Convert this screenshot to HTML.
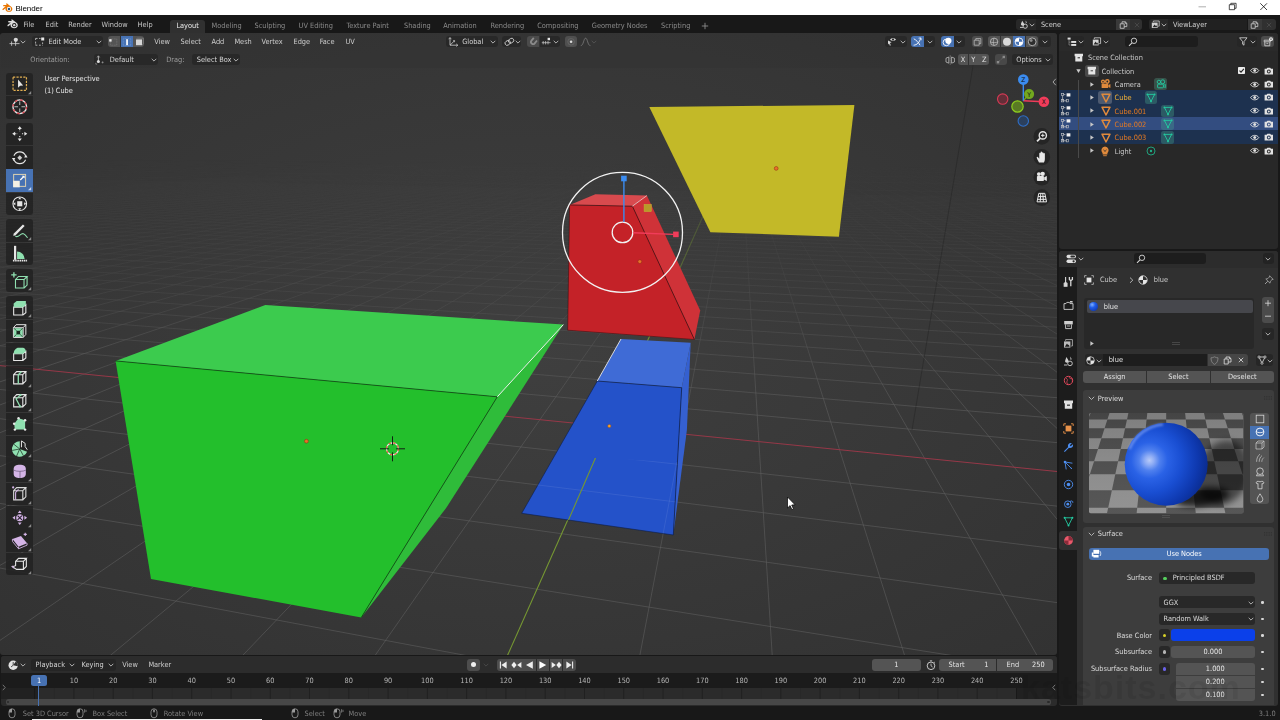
<!DOCTYPE html>
<html><head><meta charset="utf-8"><title>Blender</title>
<style>
html,body{margin:0;padding:0;background:#181818;}
body{width:1280px;height:720px;overflow:hidden;position:relative;font-family:"DejaVu Sans Condensed","DejaVu Sans","Liberation Sans",sans-serif;font-size:7.33px;color:#d4d4d4;-webkit-font-smoothing:antialiased;}
div{box-sizing:border-box;}
svg{overflow:visible;}
</style></head><body>
<svg style="position:absolute;left:0px;top:33px;" width="1057" height="622" viewBox="0 0 1057 622"><defs>
<radialGradient id="vbg" cx="50%" cy="50%" r="70.7%"><stop offset="0" stop-color="#3f3f3f"/><stop offset="1" stop-color="#323232"/></radialGradient>
<linearGradient id="gfade" x1="0" y1="0" x2="0" y2="1"><stop offset="0.20" stop-color="#000"/><stop offset="0.38" stop-color="#4a4a4a"/><stop offset="0.60" stop-color="#fff"/></linearGradient>
<mask id="gmask" maskUnits="userSpaceOnUse" x="0" y="0" width="1057" height="622"><rect width="1057" height="622" fill="url(#gfade)"/></mask>
<linearGradient id="afade" x1="0" y1="0" x2="0" y2="1"><stop offset="0.20" stop-color="#000"/><stop offset="0.36" stop-color="#707070"/><stop offset="0.52" stop-color="#fff"/></linearGradient>
<mask id="amask" maskUnits="userSpaceOnUse" x="0" y="0" width="1057" height="622"><rect width="1057" height="622" fill="url(#afade)"/></mask>
<clipPath id="bclip"><polygon points="554.4,423 677.6,429 673.3,502 521.7,480.3"/></clipPath>
<clipPath id="vclip"><rect width="1057" height="622" rx="3"/></clipPath>
</defs><g clip-path="url(#vclip)"><rect width="1057" height="622" fill="url(#vbg)"/><g mask="url(#gmask)" fill="none" stroke-width="0.8"><path d="M-5.0 163.7L396.8 129.8M-5.0 165.0L403.3 129.9M-5.0 166.5L409.9 129.9M-5.0 168.0L416.5 130.0M-5.0 169.5L423.1 130.1M-5.0 172.9L436.4 130.2M-5.0 174.7L443.1 130.3M-5.0 176.6L449.9 130.4M-5.0 178.6L456.7 130.4M-5.0 180.7L463.5 130.5M-5.0 183.0L470.3 130.6M-5.0 185.3L477.2 130.7M-5.0 187.8L484.1 130.7M-5.0 190.5L491.1 130.8M-5.0 196.3L505.1 131.0M-5.0 199.5L512.2 131.0M-5.0 202.9L519.3 131.1M-5.0 206.6L526.4 131.2M-5.0 210.6L533.5 131.3M-5.0 214.8L540.8 131.3M-5.0 219.4L548.0 131.4M-5.0 224.4L555.3 131.5M-5.0 229.8L562.6 131.6M-5.0 242.3L577.3 131.7M-5.0 249.4L584.7 131.8M-5.0 257.3L592.2 131.9M-5.0 266.2L599.7 132.0M-5.0 276.0L607.2 132.1M-5.0 287.1L614.8 132.1M-5.0 299.8L622.4 132.2M-5.0 314.2L630.1 132.3M-5.0 330.9L637.8 132.4M-5.0 373.7L653.3 132.5M-5.0 401.7L661.1 132.6M-5.0 436.0L669.0 132.7M-5.0 479.3L676.9 132.8M-5.0 625.8L13.4 630.0M-5.0 535.3L684.9 132.9M-5.0 534.1L506.0 630.0M-5.0 610.8L692.8 133.0M-5.0 469.6L998.6 630.0M101.2 630.0L700.9 133.1M-5.0 421.9L1062.0 570.3M235.5 630.0L709.0 133.1M-5.0 385.1L1062.0 516.5M369.8 630.0L717.1 133.2M-5.0 355.9L1062.0 473.7M638.4 630.0L733.4 133.4M-5.0 312.4L1062.0 410.1M772.7 630.0L741.7 133.5M-5.0 295.7L1062.0 385.8M907.0 630.0L750.0 133.6M-5.0 281.5L1062.0 365.1M1041.3 630.0L758.3 133.7M-5.0 269.3L1062.0 347.1M1062.0 492.2L766.7 133.8M-5.0 258.6L1062.0 331.5M1062.0 400.0L775.1 133.8M-5.0 249.1L1062.0 317.7M1062.0 343.0L783.6 133.9M-5.0 240.8L1062.0 305.4M1062.0 304.2L792.1 134.0M-5.0 233.3L1062.0 294.5M1062.0 276.2L800.7 134.1M-5.0 226.6L1062.0 284.7M1062.0 238.3L818.0 134.3M-5.0 215.0L1062.0 267.8M1062.0 224.9L826.7 134.4M-5.0 210.0L1062.0 260.4M1062.0 213.8L835.5 134.5M-5.0 205.4L1062.0 253.7M1062.0 204.6L844.3 134.6M-5.0 201.2L1062.0 247.5M1062.0 196.8L853.2 134.7M-5.0 197.3L1062.0 241.8M1062.0 190.1L862.1 134.8M-5.0 193.7L1062.0 236.6M1062.0 184.2L871.0 134.9M-5.0 190.3L1062.0 231.7M1062.0 179.1L880.0 135.0M-5.0 187.2L1062.0 227.1M1062.0 174.6L889.1 135.1M-5.0 184.3L1062.0 222.9M1062.0 166.9L907.4 135.3M-5.0 179.1L1062.0 215.2M1062.0 163.6L916.6 135.4M-5.0 176.7L1062.0 211.7M1062.0 160.7L925.9 135.5M-5.0 174.4L1062.0 208.4M1062.0 158.0L935.2 135.6M-5.0 172.3L1062.0 205.3M1062.0 155.5L944.6 135.7M-5.0 170.3L1062.0 202.4M1062.0 153.3L954.0 135.8M-5.0 168.4L1062.0 199.6M1062.0 151.2L963.5 135.9M-5.0 166.6L1062.0 197.0M1062.0 149.3L973.1 136.0M-5.0 164.9L1062.0 194.5M1062.0 147.5L982.7 136.1M-5.0 163.3L1062.0 192.2M1062.0 144.3L1002.0 136.3M-5.0 160.3L1062.0 187.8M1062.0 142.9L1011.8 136.4M-5.0 158.9L1062.0 185.8M1062.0 141.6L1021.6 136.5M-5.0 157.6L1062.0 183.8M1062.0 140.3L1031.5 136.6M-5.0 156.3L1062.0 182.0M1062.0 139.1L1041.5 136.7M-5.0 155.1L1062.0 180.2M1062.0 138.0L1051.5 136.8M-5.0 154.0L1062.0 178.5M1062.0 136.9L1061.5 136.9M-5.0 152.9L1062.0 176.9M-5.0 151.8L1062.0 175.3M-5.0 150.8L1062.0 173.8M-5.0 148.8L1062.0 171.0M-5.0 147.9L1062.0 169.7M-5.0 147.1L1062.0 168.4M-5.0 146.2L1062.0 167.2M-5.0 145.4L1062.0 166.0" stroke="#606060" stroke-opacity="0.72"/><path d="M-5.0 132.9L132.4 127.0M-5.0 136.8L186.6 127.6M-5.0 141.8L243.3 128.2M-5.0 148.4L302.5 128.8M-5.0 157.6L364.6 129.5M-5.0 171.2L429.7 130.2M-5.0 193.3L498.1 130.9M-5.0 235.8L569.9 131.7M-5.0 350.5L645.5 132.5M1062.0 254.9L809.3 134.2M-5.0 220.5L1062.0 275.8M1062.0 170.5L898.2 135.2M-5.0 181.6L1062.0 218.9M1062.0 145.9L992.3 136.2M-5.0 161.8L1062.0 189.9M-5.0 149.8L1062.0 172.4M-5.0 141.7L1062.0 160.6M-5.0 136.0L1062.0 152.2M17.6 131.9L1062.0 145.8M80.0 129.2L1062.0 140.9M132.4 127.0L1062.0 136.9" stroke="#646464" stroke-opacity="0.8"/></g><g mask="url(#amask)" fill="none"><path d="M-5.0 332.1L1062.0 439.0" stroke="#963848" stroke-width="1"/><path d="M504.1 630.0L725.2 133.3" stroke="#769832" stroke-width="1.1"/></g><path d="M976.5 12L912 397" stroke="#1c1c1c" stroke-opacity="0.42" stroke-width="0.8" fill="none"/><polygon points="649.3,74.1 854.4,71.9 838.9,203.7 710.4,199.2" fill="#c3b928" /><circle cx="776.2" cy="135.4" r="1.9" fill="#e8702a" stroke="#8a2a10" stroke-width="0.5"/><polygon points="497.3,363.8 563.4,291.6 446.3,474.8 361.3,584.4" fill="#2fbc3a" /><polygon points="265.3,272.1 563.4,291.6 497.3,363.8 115.6,327.9" fill="#3ccb4e" /><polygon points="115.6,327.9 497.3,363.8 361.3,584.4 151.0,546.1" fill="#23bf2c" /><polyline points="115.6,327.9 497.3,363.8 361.3,584.4" fill="none" stroke="#0b3a0e" stroke-width="0.7" /><polyline points="497.3,363.8 563.4,291.6" fill="none" stroke="#ffffff" stroke-width="0.9" /><circle cx="306.4" cy="408.2" r="1.9" fill="#e8702a" stroke="#8a2a10" stroke-width="0.5"/><polygon points="690.7,309.7 686.9,397.0 673.3,502.0 681.7,354.7" fill="#3560d0" /><polygon points="597.3,348.0 681.7,354.7 673.3,502.0 521.7,480.3" fill="#2452c9" /><polygon points="621.0,306.0 690.7,309.7 681.7,354.7 597.3,348.0" fill="#3f6bd6" /><polyline points="597.3,348.0 681.7,354.7 673.3,502.0" fill="none" stroke="#0c1c48" stroke-width="0.7" /><polyline points="673.3,502.0 521.7,480.3 597.3,348.0" fill="none" stroke="#0c1c48" stroke-width="0.6" /><polyline points="621.0,306.0 597.3,348.0" fill="none" stroke="#e8e8e8" stroke-width="0.9" /><g clip-path="url(#bclip)" fill="none"><path d="M-5.0 163.7L396.8 129.8M-5.0 165.0L403.3 129.9M-5.0 166.5L409.9 129.9M-5.0 168.0L416.5 130.0M-5.0 169.5L423.1 130.1M-5.0 172.9L436.4 130.2M-5.0 174.7L443.1 130.3M-5.0 176.6L449.9 130.4M-5.0 178.6L456.7 130.4M-5.0 180.7L463.5 130.5M-5.0 183.0L470.3 130.6M-5.0 185.3L477.2 130.7M-5.0 187.8L484.1 130.7M-5.0 190.5L491.1 130.8M-5.0 196.3L505.1 131.0M-5.0 199.5L512.2 131.0M-5.0 202.9L519.3 131.1M-5.0 206.6L526.4 131.2M-5.0 210.6L533.5 131.3M-5.0 214.8L540.8 131.3M-5.0 219.4L548.0 131.4M-5.0 224.4L555.3 131.5M-5.0 229.8L562.6 131.6M-5.0 242.3L577.3 131.7M-5.0 249.4L584.7 131.8M-5.0 257.3L592.2 131.9M-5.0 266.2L599.7 132.0M-5.0 276.0L607.2 132.1M-5.0 287.1L614.8 132.1M-5.0 299.8L622.4 132.2M-5.0 314.2L630.1 132.3M-5.0 330.9L637.8 132.4M-5.0 373.7L653.3 132.5M-5.0 401.7L661.1 132.6M-5.0 436.0L669.0 132.7M-5.0 479.3L676.9 132.8M-5.0 625.8L13.4 630.0M-5.0 535.3L684.9 132.9M-5.0 534.1L506.0 630.0M-5.0 610.8L692.8 133.0M-5.0 469.6L998.6 630.0M101.2 630.0L700.9 133.1M-5.0 421.9L1062.0 570.3M235.5 630.0L709.0 133.1M-5.0 385.1L1062.0 516.5M369.8 630.0L717.1 133.2M-5.0 355.9L1062.0 473.7M638.4 630.0L733.4 133.4M-5.0 312.4L1062.0 410.1M772.7 630.0L741.7 133.5M-5.0 295.7L1062.0 385.8M907.0 630.0L750.0 133.6M-5.0 281.5L1062.0 365.1M1041.3 630.0L758.3 133.7M-5.0 269.3L1062.0 347.1M1062.0 492.2L766.7 133.8M-5.0 258.6L1062.0 331.5M1062.0 400.0L775.1 133.8M-5.0 249.1L1062.0 317.7M1062.0 343.0L783.6 133.9M-5.0 240.8L1062.0 305.4M1062.0 304.2L792.1 134.0M-5.0 233.3L1062.0 294.5M1062.0 276.2L800.7 134.1M-5.0 226.6L1062.0 284.7M1062.0 238.3L818.0 134.3M-5.0 215.0L1062.0 267.8M1062.0 224.9L826.7 134.4M-5.0 210.0L1062.0 260.4M1062.0 213.8L835.5 134.5M-5.0 205.4L1062.0 253.7M1062.0 204.6L844.3 134.6M-5.0 201.2L1062.0 247.5M1062.0 196.8L853.2 134.7M-5.0 197.3L1062.0 241.8M1062.0 190.1L862.1 134.8M-5.0 193.7L1062.0 236.6M1062.0 184.2L871.0 134.9M-5.0 190.3L1062.0 231.7M1062.0 179.1L880.0 135.0M-5.0 187.2L1062.0 227.1M1062.0 174.6L889.1 135.1M-5.0 184.3L1062.0 222.9M1062.0 166.9L907.4 135.3M-5.0 179.1L1062.0 215.2M1062.0 163.6L916.6 135.4M-5.0 176.7L1062.0 211.7M1062.0 160.7L925.9 135.5M-5.0 174.4L1062.0 208.4M1062.0 158.0L935.2 135.6M-5.0 172.3L1062.0 205.3M1062.0 155.5L944.6 135.7M-5.0 170.3L1062.0 202.4M1062.0 153.3L954.0 135.8M-5.0 168.4L1062.0 199.6M1062.0 151.2L963.5 135.9M-5.0 166.6L1062.0 197.0M1062.0 149.3L973.1 136.0M-5.0 164.9L1062.0 194.5M1062.0 147.5L982.7 136.1M-5.0 163.3L1062.0 192.2M1062.0 144.3L1002.0 136.3M-5.0 160.3L1062.0 187.8M1062.0 142.9L1011.8 136.4M-5.0 158.9L1062.0 185.8M1062.0 141.6L1021.6 136.5M-5.0 157.6L1062.0 183.8M1062.0 140.3L1031.5 136.6M-5.0 156.3L1062.0 182.0M1062.0 139.1L1041.5 136.7M-5.0 155.1L1062.0 180.2M1062.0 138.0L1051.5 136.8M-5.0 154.0L1062.0 178.5M1062.0 136.9L1061.5 136.9M-5.0 152.9L1062.0 176.9M-5.0 151.8L1062.0 175.3M-5.0 150.8L1062.0 173.8M-5.0 148.8L1062.0 171.0M-5.0 147.9L1062.0 169.7M-5.0 147.1L1062.0 168.4M-5.0 146.2L1062.0 167.2M-5.0 145.4L1062.0 166.0" stroke="#8aa0e0" stroke-opacity="0.22" stroke-width="0.8"/><path d="M596.3 423.0L532.0 571.0" stroke="#769832" stroke-width="1.1"/></g><circle cx="609.3" cy="393" r="1.6" fill="#f8a028" stroke="#a05010" stroke-width="0.4"/><polygon points="569.6,171.9 632.4,173.2 694.4,306.5 567.7,297.2" fill="#c42228" /><polygon points="632.4,173.2 646.9,162.6 700.2,277.4 694.4,306.5" fill="#cf3238" /><polygon points="569.6,171.9 595.4,161.3 646.9,162.6 632.4,173.2" fill="#d84a4e" /><polyline points="569.6,171.9 632.4,173.2 694.4,306.5" fill="none" stroke="#3a0a0c" stroke-width="0.7" /><polyline points="569.6,171.9 567.7,297.2 694.4,306.5" fill="none" stroke="#3a0a0c" stroke-width="0.5" /><polyline points="632.4,173.2 646.9,162.6" fill="none" stroke="#f0d0d0" stroke-width="0.8" /><circle cx="639.8" cy="228.60000000000002" r="1.9" fill="#e8702a" stroke="#8a2a10" stroke-width="0.5"/><circle cx="622.5" cy="199.4" r="60" fill="none" stroke="#f2f2f2" stroke-width="1.3"/><circle cx="622.5" cy="199.4" r="10.3" fill="none" stroke="#f2f2f2" stroke-width="1.3"/><path d="M623.9 188.9V148" stroke="#3b8cf0" stroke-width="1.4"/><rect x="621.1" y="142.7" width="5.6" height="5.6" fill="#3b8cf0"/><path d="M633.3 199.70000000000002L673.3 201.4" stroke="#f03c5a" stroke-width="1.4"/><rect x="673.1" y="198.6" width="5.6" height="5.6" fill="#f03c5a"/><rect x="644.1" y="171.4" width="7.2" height="7.2" fill="#b4a428" fill-opacity="0.9" stroke="#c4b432" stroke-width="0.5"/><g transform="translate(392.5,415.8)"><circle r="6" fill="none" stroke="#f0f0f0" stroke-width="1.2"/><circle r="6" fill="none" stroke="#e8503a" stroke-width="1.2" stroke-dasharray="2.36 2.36"/><path d="M-12.5 0H-3.6M3.6 0H12.5M0 -12.5V-3.6M0 3.6V12.5" stroke="#101010" stroke-width="0.9"/></g><g transform="translate(787.5,464)"><path d="M0 0V11L2.6 8.6L4.4 12.6L6 11.9L4.2 8L7.6 7.8Z" fill="#fff" stroke="#000" stroke-width="0.7"/></g></g></svg>
<div style="position:absolute;left:0px;top:0px;width:1280px;height:15.3px;background:#ffffff;"></div>
<svg style="position:absolute;left:2px;top:3.4px;" width="10.5" height="9" viewBox="0 0 10.5 9"><g transform="scale(0.75)"><path d="M7.6 1.2 12.6 5.2c.9.8 1.3 1.8 1.2 3-.2 2.1-2.2 3.6-4.6 3.6S4.700 10.300 4.600 8.200c0-.5.100-1 .300-1.400L2.200 8.900c-.5.400-1.200.400-1.500 0-.300-.400-.200-1 .300-1.400l3.900-3H2.400c-.6 0-1-.400-1-.900s.400-.900 1-.900h4.200L5.700 2c-.4-.4-.5-.9-.1-1.300.4-.300 1.200-.200 2 .5z" fill="#ea7600"/><circle cx="9.300" cy="7.900" r="2.800" fill="#fff"/><circle cx="9.300" cy="7.900" r="1.700" fill="#265787"/></g></svg>
<svg style="position:absolute;left:1190px;top:0px;" width="90" height="15" viewBox="0 0 90 15"><path d="M8.500 6.800H16" stroke="#9a9a9a" stroke-width="0.8" fill="none"/>
<path d="M39.300 4.700H44.600V9.700H39.300ZM40.800 4.700V3.300H46.100V8.300H44.600" stroke="#111" stroke-width="0.75" fill="none"/>
<path d="M70.300 3.300L77 10M77 3.300L70.300 10" stroke="#111" stroke-width="0.8" fill="none"/></svg>
<div style="position:absolute;left:0px;top:15.3px;width:1280px;height:17.7px;background:#181818;"></div>
<svg style="position:absolute;left:6.5px;top:19px;" width="11" height="9.5" viewBox="0 0 11 9.5"><g transform="scale(0.78)"><path d="M7.600 1.200 12.600 5.200c.900.800 1.300 1.800 1.200 3-.200 2.100-2.200 3.600-4.600 3.600S4.700 10.300 4.600 8.200c0-.5.100-1 .300-1.400L2.200 8.900c-.5.400-1.200.400-1.500 0-.300-.400-.200-1 .300-1.400l3.900-3H2.400c-.6 0-1-.400-1-.900s.400-.900 1-.900h4.200L5.700 2c-.4-.4-.5-.9-.1-1.300.4-.300 1.200-.200 2 .5z" fill="#dcdcdc"/><circle cx="9.300" cy="7.900" r="2.700" fill="#181818"/><circle cx="9.300" cy="7.900" r="1.500" fill="#dcdcdc"/></g></svg>
<div style="position:absolute;left:169.5px;top:19.8px;width:35px;height:13.3px;background:#303030;border-radius:3px 3px 0 0;"></div>
<svg style="position:absolute;left:700px;top:20.5px;" width="10" height="10" viewBox="0 0 10 10"><path d="M5 1.800V8.200M1.800 5H8.200" stroke="#8a8a8a" stroke-width="0.9" fill="none"/></svg>
<div style="position:absolute;left:1016.3px;top:18.7px;width:20.100000000000136px;height:11.6px;background:#282828;border-radius:3px 0 0 3px;"></div>
<div style="position:absolute;left:1036.4px;top:18.7px;width:79.39999999999995px;height:11.6px;background:#212121;"></div>
<div style="position:absolute;left:1116.2px;top:18.7px;width:13.6px;height:11.6px;background:#3a3a3a;"></div>
<div style="position:absolute;left:1130.2px;top:18.7px;width:12.099999999999909px;height:11.6px;background:#303030;border-radius:0 3px 3px 0;"></div>
<svg style="position:absolute;left:1028.6000000000001px;top:22.8px;" width="6" height="4" viewBox="0 0 6 4"><path d="M0.700 0.800L3 3.100L5.300 0.800" stroke="#bdbdbd" stroke-width="0.9" fill="none"/></svg>
<svg style="position:absolute;left:1118.7px;top:20.5px;" width="9" height="8" viewBox="0 0 9 8"><path d="M1.200 2.800H5.200V7.300H1.200ZM3 2.800V0.800H6.200L7.800 2.300V5.600H5.200M6.200 0.800V2.300H7.800" stroke="#cfcfcf" stroke-width="0.8" fill="none"/></svg>
<svg style="position:absolute;left:1133.7px;top:21.7px;" width="6" height="6" viewBox="0 0 6 6"><path d="M0.800 0.800L5.200 5.200M5.200 0.800L0.800 5.200" stroke="#4a4a4a" stroke-width="0.9" fill="none"/></svg>
<svg style="position:absolute;left:1018.8px;top:20.2px;" width="10" height="9" viewBox="0 0 10 9"><path d="M3.200 0.800L5 3.600C5.600 4.700 5 5.800 3.700 5.800S1.500 4.700 2.100 3.600ZM6.600 0.500L7.600 2C7.900 2.600 7.600 3.200 6.900 3.200" fill="#d2d2d2"/><circle cx="6.200" cy="6.200" r="2.100" fill="none" stroke="#d2d2d2" stroke-width="0.9"/><path d="M1 7.400H4" stroke="#d2d2d2" stroke-width="0.9"/></svg>
<div style="position:absolute;left:1148.6px;top:18.7px;width:19.800000000000182px;height:11.6px;background:#282828;border-radius:3px 0 0 3px;"></div>
<div style="position:absolute;left:1168.4px;top:18.7px;width:78.79999999999981px;height:11.6px;background:#212121;"></div>
<div style="position:absolute;left:1247.6px;top:18.7px;width:14.00000000000009px;height:11.6px;background:#3a3a3a;"></div>
<div style="position:absolute;left:1262px;top:18.7px;width:14px;height:11.6px;background:#303030;border-radius:0 3px 3px 0;"></div>
<svg style="position:absolute;left:1160.6000000000001px;top:22.8px;" width="6" height="4" viewBox="0 0 6 4"><path d="M0.700 0.800L3 3.100L5.300 0.800" stroke="#bdbdbd" stroke-width="0.9" fill="none"/></svg>
<svg style="position:absolute;left:1250.1px;top:20.5px;" width="9" height="8" viewBox="0 0 9 8"><path d="M1.200 2.800H5.200V7.300H1.200ZM3 2.800V0.800H6.200L7.800 2.300V5.600H5.200M6.200 0.800V2.300H7.800" stroke="#cfcfcf" stroke-width="0.8" fill="none"/></svg>
<svg style="position:absolute;left:1265.5px;top:21.7px;" width="6" height="6" viewBox="0 0 6 6"><path d="M0.800 0.800L5.200 5.200M5.200 0.800L0.800 5.200" stroke="#4a4a4a" stroke-width="0.9" fill="none"/></svg>
<svg style="position:absolute;left:1151.1px;top:20.2px;" width="10" height="9" viewBox="0 0 10 9"><path d="M0.800 2.600H6.600V8H0.800Z" fill="#d2d2d2"/><path d="M2.300 2V1H8.200V6.200H7.200" stroke="#d2d2d2" stroke-width="0.800" fill="none"/><path d="M1.600 7.200L3.600 4.400L4.800 6L5.400 5.300L6.200 7.200Z" fill="#282828"/></svg>
<div style="position:absolute;left:1.3px;top:33px;width:1055.7px;height:35.4px;background:rgba(48,48,48,0.35);border-radius:3px 3px 0 0;"></div>
<svg style="position:absolute;left:8.5px;top:36.5px;" width="12" height="10" viewBox="0 0 12 10"><path d="M0.500 6.600H10.500M2.600 4.400V8.800M6.600 4.400V8.800" stroke="#d0d0d0" stroke-width="0.800" fill="none"/><circle cx="6.800" cy="2.800" r="2.100" fill="#d8d8d8"/></svg>
<svg style="position:absolute;left:20.2px;top:39.9px;" width="6" height="4" viewBox="0 0 6 4"><path d="M0.700 0.800L3 3.100L5.300 0.800" stroke="#bdbdbd" stroke-width="0.9" fill="none"/></svg>
<div style="position:absolute;left:31.9px;top:35.7px;width:71.2px;height:11.6px;background:#282828;border-radius:3px;"></div>
<svg style="position:absolute;left:34.2px;top:37px;" width="11" height="9" viewBox="0 0 11 9"><path d="M1.600 3V1.400H3.600M5 1.400H6.600M1.600 4.600V6.600M1.600 7.600V8.200H3.400M5 8.200H6.800M8.600 5.400V7M8.600 8.200H8" stroke="#cfcfcf" stroke-width="0.8" fill="none"/><rect x="7.200" y="0.500" width="3" height="3" fill="#e8e8e8"/></svg>
<svg style="position:absolute;left:96.4px;top:39.9px;" width="6" height="4" viewBox="0 0 6 4"><path d="M0.700 0.800L3 3.100L5.300 0.800" stroke="#bdbdbd" stroke-width="0.9" fill="none"/></svg>
<div style="position:absolute;left:107.8px;top:35.7px;width:12.3px;height:11.6px;background:#545454;border-radius:3px 0 0 3px;"></div>
<div style="position:absolute;left:120.6px;top:35.7px;width:12px;height:11.6px;background:#4772b3;"></div>
<div style="position:absolute;left:133.1px;top:35.7px;width:11.4px;height:11.6px;background:#545454;border-radius:0 3px 3px 0;"></div>
<svg style="position:absolute;left:107.4px;top:35.7px;" width="13" height="11.6" viewBox="0 0 13 11.6"><path d="M3.400 3V9.200H9.800V3Z" stroke="#7a7a7a" stroke-width="0.7" fill="none" stroke-dasharray="1 0.6"/><rect x="2.200" y="3.200" width="2.400" height="2.400" fill="#efefef"/></svg>
<svg style="position:absolute;left:120.6px;top:35.7px;" width="12" height="11.6" viewBox="0 0 12 11.6"><path d="M2.300 2.600H9.700V9.600H2.300Z" stroke="#6f95cf" stroke-width="0.7" fill="none" stroke-dasharray="1 0.6"/><rect x="5.200" y="3.200" width="1.700" height="6" fill="#ffffff"/></svg>
<svg style="position:absolute;left:132.6px;top:35.7px;" width="12.3" height="11.6" viewBox="0 0 12.3 11.6"><rect x="3" y="3.400" width="6" height="5.800" fill="#d6d6d6"/><path d="M3 3.400L4.600 2.200H10.400V7.800L9 9.200" stroke="#8a8a8a" stroke-width="0.6" fill="none"/></svg>
<div style="position:absolute;left:446px;top:35.7px;width:51.6px;height:11.6px;background:#282828;border-radius:3px;"></div>
<svg style="position:absolute;left:447.8px;top:36.6px;" width="11" height="10" viewBox="0 0 11 10"><path d="M2 0.800V8.200H9.600M2 8.200L6.400 3.900" stroke="#d0d0d0" stroke-width="0.800" fill="none"/><path d="M0.700 2.200L2 0.500L3.300 2.200M8.200 6.900L9.900 8.200L8.200 9.500M5 3.700L6.600 3.600L6.500 5.200" stroke="#d0d0d0" stroke-width="0.700" fill="none"/></svg>
<svg style="position:absolute;left:490.3px;top:39.9px;" width="6" height="4" viewBox="0 0 6 4"><path d="M0.700 0.800L3 3.100L5.300 0.800" stroke="#bdbdbd" stroke-width="0.9" fill="none"/></svg>
<div style="position:absolute;left:502.4px;top:35.7px;width:18.8px;height:11.6px;background:#282828;border-radius:3px;"></div>
<svg style="position:absolute;left:504px;top:37px;" width="11" height="9.5" viewBox="0 0 11 9.5"><g transform="rotate(-32 5.400 4.800)" fill="none" stroke="#d0d0d0" stroke-width="0.850"><rect x="0.600" y="2.700" width="5.600" height="4.200" rx="2.100"/><rect x="4.600" y="2.700" width="5.600" height="4.200" rx="2.100"/></g></svg>
<svg style="position:absolute;left:515px;top:39.9px;" width="6" height="4" viewBox="0 0 6 4"><path d="M0.700 0.800L3 3.100L5.300 0.800" stroke="#bdbdbd" stroke-width="0.9" fill="none"/></svg>
<div style="position:absolute;left:527px;top:35.7px;width:12.4px;height:11.6px;background:#4b4b4b;border-radius:3px 0 0 3px;"></div>
<svg style="position:absolute;left:527px;top:35.7px;" width="12.4" height="11.6" viewBox="0 0 12.4 11.6"><g transform="rotate(40 6.200 5.800)"><path d="M3.200 2.400V6A3 3 0 0 0 9.200 6V2.400H7.400V6A1.200 1.200 0 0 1 5 6V2.400Z" fill="#8a8a8a"/></g></svg>
<div style="position:absolute;left:539.8px;top:35.7px;width:20.6px;height:11.6px;background:#282828;border-radius:0 3px 3px 0;"></div>
<svg style="position:absolute;left:541px;top:37.4px;" width="11" height="9" viewBox="0 0 11 9"><path d="M0.800 5.700H9.600M2.200 4V7.400M4.600 4V7.400M7 4V7.400" stroke="#cfcfcf" stroke-width="0.700" fill="none"/><rect x="6.600" y="0.800" width="2.400" height="2.400" fill="#e6e6e6"/></svg>
<svg style="position:absolute;left:553.3px;top:39.9px;" width="6" height="4" viewBox="0 0 6 4"><path d="M0.700 0.800L3 3.100L5.300 0.800" stroke="#bdbdbd" stroke-width="0.9" fill="none"/></svg>
<div style="position:absolute;left:565px;top:35.7px;width:12.2px;height:11.6px;background:#4f4f4f;border-radius:3px;"></div>
<svg style="position:absolute;left:565px;top:35.7px;" width="12.2" height="11.6" viewBox="0 0 12.2 11.6"><circle cx="6.100" cy="5.800" r="3.300" fill="none" stroke="#6a6a6a" stroke-width="0.700"/><circle cx="6.100" cy="5.800" r="1.300" fill="#dcdcdc"/></svg>
<svg style="position:absolute;left:579.5px;top:36.5px;" width="12" height="10" viewBox="0 0 12 10"><path d="M0.800 8.600C3.600 8.600 3.600 1.200 5.600 1.200S7.600 8.600 10.400 8.600" stroke="#7c7c7c" stroke-width="0.800" fill="none"/></svg>
<svg style="position:absolute;left:591.3px;top:39.9px;" width="6" height="4" viewBox="0 0 6 4"><path d="M0.700 0.800L3 3.100L5.300 0.800" stroke="#555" stroke-width="0.9" fill="none"/></svg>
<div style="position:absolute;left:885.4px;top:35.7px;width:22px;height:11.6px;background:#282828;border-radius:3px;"></div>
<svg style="position:absolute;left:887px;top:36.3px;" width="12" height="10.5" viewBox="0 0 12 10.5"><path d="M3 3.600C4.300 1.700 7.700 1.700 9 3.600C7.700 5.500 4.300 5.500 3 3.600Z" fill="#d8d8d8"/><circle cx="6" cy="3.600" r="1.100" fill="#2e2e2e"/><path d="M1 4.500L4.600 6.300L2.900 7L3.800 9.300L2.900 9.700L2 7.400L1 8.600Z" fill="#d8d8d8"/></svg>
<svg style="position:absolute;left:899.6px;top:39.9px;" width="6" height="4" viewBox="0 0 6 4"><path d="M0.700 0.800L3 3.100L5.300 0.800" stroke="#bdbdbd" stroke-width="0.9" fill="none"/></svg>
<div style="position:absolute;left:911px;top:35.7px;width:12.6px;height:11.6px;background:#4772b3;border-radius:3px 0 0 3px;"></div>
<svg style="position:absolute;left:911px;top:35.7px;" width="12.6" height="11.6" viewBox="0 0 12.6 11.6"><path d="M2.600 9.200C6 9 8.400 6.400 9.600 2.400M2.800 2.800C5.200 4 7.600 6.400 9 9.200" stroke="#fff" stroke-width="0.900" fill="none"/><path d="M7.600 2.200L9.900 1.900L10.200 4.200" stroke="#fff" stroke-width="0.800" fill="none"/></svg>
<div style="position:absolute;left:924px;top:35.7px;width:11.4px;height:11.6px;background:#282828;border-radius:0 3px 3px 0;"></div>
<svg style="position:absolute;left:926.6px;top:39.9px;" width="6" height="4" viewBox="0 0 6 4"><path d="M0.700 0.800L3 3.100L5.300 0.800" stroke="#bdbdbd" stroke-width="0.9" fill="none"/></svg>
<div style="position:absolute;left:941.2px;top:35.7px;width:12.4px;height:11.6px;background:#4772b3;border-radius:3px 0 0 3px;"></div>
<svg style="position:absolute;left:941.2px;top:35.7px;" width="12.4" height="11.6" viewBox="0 0 12.4 11.6"><circle cx="5.400" cy="6.400" r="3.300" fill="none" stroke="#fff" stroke-width="0.900"/><circle cx="7.400" cy="4.800" r="3.100" fill="#fff"/></svg>
<div style="position:absolute;left:954px;top:35.7px;width:10.6px;height:11.6px;background:#282828;border-radius:0 3px 3px 0;"></div>
<svg style="position:absolute;left:956.3px;top:39.9px;" width="6" height="4" viewBox="0 0 6 4"><path d="M0.700 0.800L3 3.100L5.300 0.800" stroke="#bdbdbd" stroke-width="0.9" fill="none"/></svg>
<div style="position:absolute;left:971.6px;top:35.7px;width:11px;height:11.6px;background:#4d4d4d;border-radius:3px;"></div>
<svg style="position:absolute;left:971.6px;top:35.7px;" width="11" height="11.6" viewBox="0 0 11 11.6"><path d="M2.200 4.200H7.200V9.200H2.200ZM3.800 4.200V2.600H8.800V7.600H7.200" stroke="#c6c6c6" stroke-width="0.700" fill="none"/></svg>
<div style="position:absolute;left:988.2px;top:35.7px;width:12.3px;height:11.6px;background:#545454;border-radius:3px 0 0 3px;"></div>
<div style="position:absolute;left:1000.9px;top:35.7px;width:12.1px;height:11.6px;background:#545454;"></div>
<div style="position:absolute;left:1013.4px;top:35.7px;width:12px;height:11.6px;background:#4772b3;"></div>
<div style="position:absolute;left:1025.8px;top:35.7px;width:12.4px;height:11.6px;background:#545454;border-radius:0 3px 3px 0;"></div>
<svg style="position:absolute;left:988.2px;top:35.7px;" width="12.3" height="11.6" viewBox="0 0 12.3 11.6"><circle cx="6.100" cy="5.800" r="3.700" fill="none" stroke="#cfcfcf" stroke-width="0.700"/><path d="M2.400 5.800C4 7 8.200 7 9.800 5.800M6.100 2.100C5 4 5 7.600 6.100 9.500" stroke="#cfcfcf" stroke-width="0.600" fill="none"/></svg>
<svg style="position:absolute;left:1000.9px;top:35.7px;" width="12.1" height="11.6" viewBox="0 0 12.1 11.6"><circle cx="6" cy="5.800" r="4" fill="#d9d9d9"/></svg>
<svg style="position:absolute;left:1013.4px;top:35.7px;" width="12" height="11.6" viewBox="0 0 12 11.6"><circle cx="6" cy="5.800" r="3.900" fill="#fff"/><path d="M6 1.900A3.900 3.900 0 0 1 9.900 5.800H6ZM6 5.800V9.700A3.900 3.900 0 0 1 2.100 5.800Z" fill="#4772b3"/><circle cx="6" cy="5.800" r="3.900" fill="none" stroke="#fff" stroke-width="0.800"/></svg>
<svg style="position:absolute;left:1025.8px;top:35.7px;" width="12.4" height="11.6" viewBox="0 0 12.4 11.6"><circle cx="6.200" cy="5.800" r="3.900" fill="#2e2e2e" stroke="#bdbdbd" stroke-width="0.900"/><circle cx="5.100" cy="4.600" r="1.500" fill="#8c8c8c"/></svg>
<div style="position:absolute;left:1038.8px;top:35.7px;width:12.6px;height:11.6px;background:#282828;border-radius:3px;"></div>
<svg style="position:absolute;left:1042px;top:39.9px;" width="6" height="4" viewBox="0 0 6 4"><path d="M0.700 0.800L3 3.100L5.300 0.800" stroke="#bdbdbd" stroke-width="0.9" fill="none"/></svg>
<div style="position:absolute;left:93.8px;top:53.8px;width:63.8px;height:11.2px;background:#282828;border-radius:3px;"></div>
<svg style="position:absolute;left:95px;top:54.6px;" width="11" height="10" viewBox="0 0 11 10"><path d="M3.400 1.400V7.400" stroke="#cfcfcf" stroke-width="0.800" fill="none"/><path d="M2.200 2.400L3.400 0.800L4.600 2.400" stroke="#cfcfcf" stroke-width="0.700" fill="none"/><circle cx="3.400" cy="6.600" r="1.500" fill="#dedede"/><path d="M0.800 7.800V9.200H2.200M6.600 7.400H8.600M7.600 6.400V8.400" stroke="#9c9c9c" stroke-width="0.700" fill="none"/></svg>
<svg style="position:absolute;left:151.4px;top:58.4px;" width="6" height="4" viewBox="0 0 6 4"><path d="M0.700 0.800L3 3.100L5.300 0.800" stroke="#bdbdbd" stroke-width="0.9" fill="none"/></svg>
<div style="position:absolute;left:191.6px;top:53.8px;width:48.6px;height:11.2px;background:#282828;border-radius:3px;"></div>
<svg style="position:absolute;left:233.4px;top:58.4px;" width="6" height="4" viewBox="0 0 6 4"><path d="M0.700 0.800L3 3.100L5.300 0.800" stroke="#bdbdbd" stroke-width="0.9" fill="none"/></svg>
<svg style="position:absolute;left:944.5px;top:54.5px;" width="11" height="10" viewBox="0 0 11 10"><path d="M5.200 0.500V9.500" stroke="#bdbdbd" stroke-width="0.700" stroke-dasharray="1.200 0.800" fill="none"/><path d="M3.800 2L1 3.200V7L3.800 8.200ZM6.600 2L9.400 3.200V7L6.600 8.200Z" stroke="#cfcfcf" stroke-width="0.700" fill="none"/></svg>
<div style="position:absolute;left:957.8px;top:53.8px;width:10.3px;height:11.2px;background:#545454;border-radius:3px 0 0 3px;"></div>
<div style="position:absolute;left:968.5px;top:53.8px;width:10.2px;height:11.2px;background:#545454;"></div>
<div style="position:absolute;left:979.1px;top:53.8px;width:10.4px;height:11.2px;background:#545454;border-radius:0 3px 3px 0;"></div>
<div style="position:absolute;left:994.8px;top:53.8px;width:11.9px;height:11.2px;background:#484848;border-radius:3px;"></div>
<svg style="position:absolute;left:994.8px;top:53.8px;" width="11.9" height="11.2" viewBox="0 0 11.9 11.2"><path d="M2.600 8.600L9.200 2.600" stroke="#7d7d7d" stroke-width="0.700" stroke-dasharray="1.200 0.900" fill="none"/><rect x="1.800" y="7" width="2.400" height="2.400" fill="#8a8a8a"/><rect x="7.600" y="1.800" width="2.400" height="2.400" fill="#8a8a8a"/></svg>
<div style="position:absolute;left:1012px;top:53.8px;width:41px;height:11.2px;background:#282828;border-radius:3px;"></div>
<svg style="position:absolute;left:1045.2px;top:58.4px;" width="6" height="4" viewBox="0 0 6 4"><path d="M0.700 0.800L3 3.100L5.300 0.800" stroke="#bdbdbd" stroke-width="0.9" fill="none"/></svg>
<svg style="position:absolute;left:0px;top:0px;pointer-events:none;" width="1280" height="720" viewBox="0 0 1280 720"><circle cx="1002.7" cy="99.1" r="5.200" fill="#8c2a3c" fill-opacity="0.55" stroke="#d83a55" stroke-width="1.100"/><circle cx="1023.3" cy="121" r="5.200" fill="#244a80" fill-opacity="0.55" stroke="#2f6fc8" stroke-width="1.100"/><path d="M1023.3 100.7L1029.100 94.100" stroke="#7aa81e" stroke-width="1.300"/><circle cx="1029.1" cy="94.100" r="5" fill="#73a81f"/><path d="M1023.3 100.7L1043.900 101.800" stroke="#f03c5a" stroke-width="1.400"/><path d="M1023.3 100.7L1023.300 79.600" stroke="#3b8cf0" stroke-width="1.400"/><circle cx="1043.9" cy="101.800" r="5.300" fill="#f03c5a"/><circle cx="1023.3" cy="79.600" r="5.300" fill="#3b8cf0"/><circle cx="1017.5" cy="106.500" r="5.700" fill="#5a7a24" stroke="#8ccc1e" stroke-width="1.200"/><g font-size="6.600" font-family="DejaVu Sans Condensed,DejaVu Sans,sans-serif" fill="#101010" text-anchor="middle"><text x="1043.900" y="104.200">X</text><text x="1029.100" y="96.500">Y</text><text x="1023.300" y="82">Z</text></g></svg>
<svg style="position:absolute;left:0px;top:0px;pointer-events:none;" width="1280" height="720" viewBox="0 0 1280 720"><circle cx="1041.8" cy="136.4" r="8.300" fill="#222222" fill-opacity="0.8"/><circle cx="1041.8" cy="157.2" r="8.300" fill="#222222" fill-opacity="0.8"/><circle cx="1041.8" cy="177.3" r="8.300" fill="#222222" fill-opacity="0.8"/><circle cx="1041.8" cy="197.6" r="8.300" fill="#222222" fill-opacity="0.8"/><g transform="translate(1041.800,136.400) scale(1.25)" stroke="#e4e4e4" fill="none" stroke-width="1.100"><circle cx="0.800" cy="-0.800" r="2.900"/><path d="M-1.400 1.600L-3.800 4" stroke-width="1.500"/><path d="M-0.600 -0.800H2.200M0.800 -2.200V0.600" stroke-width="0.800"/></g><g transform="translate(1042.400,157.200) scale(1.3)"><path d="M-2.600 4C-3.400 2.600 -4.200 1 -4.400 0.200C-4.400 -0.500 -3.600 -0.500 -3.200 0.200L-2.400 1.200V-2.800C-2.400 -3.600 -1.400 -3.600 -1.400 -2.800V-3.800C-1.400 -4.600 -0.300 -4.600 -0.300 -3.800V-3.200C-0.300 -4.100 0.800 -4.100 0.800 -3.200V-2.600C0.800 -3.400 1.900 -3.400 1.900 -2.600V1.400C1.900 2.600 1.500 3.400 1.200 4Z" fill="#e8e8e8"/></g><g transform="translate(1041.600,177.100) scale(1.3)" fill="#e8e8e8"><rect x="-3.600" y="-0.800" width="5.400" height="3.800" rx="0.600"/><path d="M2 0.200L4 -0.800V3L2 2Z"/><circle cx="-2.100" cy="-2.300" r="1.500"/><circle cx="0.800" cy="-2.500" r="1.700"/></g><g transform="translate(1041.800,197.600) scale(1.25)" stroke="#e8e8e8" fill="none" stroke-width="0.800"><path d="M-2.400 -3.400H2.400L3.800 3.400H-3.800ZM-3 -0.800H3M-3.400 1.400H3.400M-0.800 -3.400L-1.300 3.400M0.800 -3.400L1.300 3.400"/></g></svg>
<svg style="position:absolute;left:1051.5px;top:78px;" width="5" height="8" viewBox="0 0 5 8"><path d="M3.800 0.800L1 4L3.800 7.200" stroke="#b0b0b0" stroke-width="0.900" fill="none"/></svg>
<div style="position:absolute;left:6.2px;top:72.6px;width:26.7px;height:22.63px;background:rgba(34,34,34,0.86);border-radius:3px 3px 0 0;"></div>
<svg style="position:absolute;left:9.8px;top:74.16px;" width="19.5" height="19.5" viewBox="0 0 16 16"><rect x="2.500" y="2.500" width="11" height="11" fill="none" stroke="#e0ae52" stroke-width="1" stroke-dasharray="1.800 1"/><path d="M6.600 4.600V11.200L8.300 9.600L10.800 9.400Z" fill="#e6e6e6"/></svg>
<svg style="position:absolute;left:28.299999999999997px;top:90.63px;" width="3.2" height="3.2" viewBox="0 0 3.2 3.2"><path d="M3.200 0V3.200H0Z" fill="#8a8a8a"/></svg>
<div style="position:absolute;left:6.2px;top:95.93px;width:26.7px;height:22.63px;background:rgba(34,34,34,0.86);border-radius:0 0 3px 3px;"></div>
<svg style="position:absolute;left:9.8px;top:97.49px;" width="19.5" height="19.5" viewBox="0 0 16 16"><circle cx="8" cy="8" r="5.600" fill="none" stroke="#e6e6e6" stroke-width="1.100"/><circle cx="8" cy="8" r="5.600" fill="none" stroke="#d8404a" stroke-width="1.100" stroke-dasharray="2.200 2.200"/><path d="M8 3.600V6.600M8 9.400V12.400M3.600 8H6.600M9.400 8H12.400" stroke="#bdbdbd" stroke-width="0.8"/></svg>
<div style="position:absolute;left:6.2px;top:122.66px;width:26.7px;height:22.63px;background:rgba(34,34,34,0.86);border-radius:3px 3px 0 0;"></div>
<svg style="position:absolute;left:9.8px;top:124.22px;" width="19.5" height="19.5" viewBox="0 0 16 16"><path d="M8 1.800L9.700 4.200H6.300ZM8 14.200L9.700 11.800H6.300ZM1.800 8L4.200 6.300V9.700ZM14.200 8L11.800 6.300V9.700Z" fill="#e6e6e6"/><path d="M8 4.200V6.200M8 9.800V11.800M4.200 8H6.200M9.800 8H11.800" stroke="#e6e6e6" stroke-width="0.9" stroke-dasharray="1 0.8"/></svg>
<div style="position:absolute;left:6.2px;top:145.99px;width:26.7px;height:22.63px;background:rgba(34,34,34,0.86);border-radius:0 0 0 0;"></div>
<svg style="position:absolute;left:9.8px;top:147.56px;" width="19.5" height="19.5" viewBox="0 0 16 16"><path d="M3.200 6.400A5.200 5.200 0 0 1 12.800 6.400M12.800 9.600A5.200 5.200 0 0 1 3.200 9.600" stroke="#e6e6e6" stroke-width="0.9" fill="none"/><path d="M11.600 7.800L13 5.400L14.400 7.800ZM4.400 8.200L3 10.600L1.600 8.200Z" fill="#e6e6e6"/><path d="M8 6L10 8L8 10L6 8Z" fill="#cfcfcf"/></svg>
<div style="position:absolute;left:6.2px;top:169.32px;width:26.7px;height:22.63px;background:#4772b3;border-radius:0 0 0 0;"></div>
<svg style="position:absolute;left:9.8px;top:170.88px;" width="19.5" height="19.5" viewBox="0 0 16 16"><rect x="3" y="2.800" width="9.800" height="9.800" fill="none" stroke="#dfd3b0" stroke-width="0.8"/><rect x="2.600" y="8" width="5.400" height="5.400" fill="#f4f0e4"/><path d="M8.400 7.400L11.400 4.400" stroke="#fff" stroke-width="1.100"/><path d="M9.600 3.800H12V6.200Z" fill="#fff"/></svg>
<svg style="position:absolute;left:28.299999999999997px;top:187.35px;" width="3.2" height="3.2" viewBox="0 0 3.2 3.2"><path d="M3.200 0V3.200H0Z" fill="#c8d6ee"/></svg>
<div style="position:absolute;left:6.2px;top:192.65px;width:26.7px;height:22.63px;background:rgba(34,34,34,0.86);border-radius:0 0 3px 3px;"></div>
<svg style="position:absolute;left:9.8px;top:194.21px;" width="19.5" height="19.5" viewBox="0 0 16 16"><circle cx="8" cy="8" r="5.600" fill="none" stroke="#e6e6e6" stroke-width="0.9"/><rect x="5.900" y="5.900" width="4.200" height="4.200" fill="#e6e6e6"/><path d="M8 2.600L9.200 4.400H6.800ZM8 13.400L9.200 11.600H6.800ZM2.600 8L4.400 6.800V9.200ZM13.400 8L11.600 6.800V9.200Z" fill="#e6e6e6"/></svg>
<div style="position:absolute;left:6.2px;top:219.38px;width:26.7px;height:22.63px;background:rgba(34,34,34,0.86);border-radius:3px 3px 0 0;"></div>
<svg style="position:absolute;left:9.8px;top:220.94px;" width="19.5" height="19.5" viewBox="0 0 16 16"><path d="M3 10.400L10.600 2.800L12 4.200L4.400 11.800L2.600 12.200Z" fill="#e6e6e6"/><path d="M4.400 12.400C7 14.400 8.600 9.600 11 10.400S13 13.200 14.600 13.600" stroke="#8fe0b0" stroke-width="0.9" fill="none"/></svg>
<svg style="position:absolute;left:28.299999999999997px;top:237.41px;" width="3.2" height="3.2" viewBox="0 0 3.2 3.2"><path d="M3.200 0V3.200H0Z" fill="#8a8a8a"/></svg>
<div style="position:absolute;left:6.2px;top:242.71px;width:26.7px;height:22.63px;background:rgba(34,34,34,0.86);border-radius:0 0 3px 3px;"></div>
<svg style="position:absolute;left:9.8px;top:244.27px;" width="19.5" height="19.5" viewBox="0 0 16 16"><path d="M4.200 1.500V13" stroke="#e6e6e6" stroke-width="1.800"/><path d="M2.400 13.600H14" stroke="#e6e6e6" stroke-width="1.500" stroke-dasharray="1.300 0.500"/><path d="M5.800 12.400V6.200A6.200 6.200 0 0 1 12 12.400Z" fill="#8fe0b0"/></svg>
<div style="position:absolute;left:6.2px;top:269.44px;width:26.7px;height:22.63px;background:rgba(34,34,34,0.86);border-radius:3px 3px 3px 3px;"></div>
<svg style="position:absolute;left:9.8px;top:271.0px;" width="19.5" height="19.5" viewBox="0 0 16 16"><path d="M4.500 7H11.500V14H4.500ZM4.500 7L7 4.500H14L11.500 7M14 4.500V11.500L11.500 14" stroke="#8fe0b0" stroke-width="0.9" fill="none"/><path d="M3.200 1V5.400M1 3.200H5.400" stroke="#8fe0b0" stroke-width="1.100"/></svg>
<svg style="position:absolute;left:28.299999999999997px;top:287.47px;" width="3.2" height="3.2" viewBox="0 0 3.2 3.2"><path d="M3.200 0V3.200H0Z" fill="#8a8a8a"/></svg>
<div style="position:absolute;left:6.2px;top:296.17px;width:26.7px;height:22.63px;background:rgba(34,34,34,0.86);border-radius:3px 3px 0 0;"></div>
<svg style="position:absolute;left:9.8px;top:297.73px;" width="19.5" height="19.5" viewBox="0 0 16 16"><path d="M3 7.500H10.500V14H3ZM10.500 7.500L13 5.500V12L10.500 14" stroke="#e6e6e6" stroke-width="0.9" fill="none"/><path d="M3 7.500V4.500L5.500 2.500H13V5.500L10.500 7.500Z" fill="#8fe0b0"/></svg>
<svg style="position:absolute;left:28.299999999999997px;top:314.2px;" width="3.2" height="3.2" viewBox="0 0 3.2 3.2"><path d="M3.200 0V3.200H0Z" fill="#8a8a8a"/></svg>
<div style="position:absolute;left:6.2px;top:319.5px;width:26.7px;height:22.63px;background:rgba(34,34,34,0.86);border-radius:0 0 0 0;"></div>
<svg style="position:absolute;left:9.8px;top:321.06px;" width="19.5" height="19.5" viewBox="0 0 16 16"><path d="M2.800 5.500H10.800V13.500H2.800ZM2.800 5.500L5 3H13L10.800 5.500M13 3V11L10.800 13.500" stroke="#e6e6e6" stroke-width="0.8" fill="none"/><rect x="3.200" y="5.900" width="7.200" height="7.200" fill="#8fe0b0"/><rect x="5.300" y="8" width="3" height="3" fill="#1a2a20"/><path d="M3.200 5.900L5.300 8M10.400 5.900L8.300 8M3.200 13.100L5.300 11M10.400 13.100L8.300 11" stroke="#1a2a20" stroke-width="0.600"/></svg>
<div style="position:absolute;left:6.2px;top:342.83px;width:26.7px;height:22.63px;background:rgba(34,34,34,0.86);border-radius:0 0 0 0;"></div>
<svg style="position:absolute;left:9.8px;top:344.39px;" width="19.5" height="19.5" viewBox="0 0 16 16"><path d="M3 8H10.500V13.500H3ZM10.500 8L13 6V11.500L10.500 13.500" stroke="#e6e6e6" stroke-width="0.9" fill="none"/><path d="M3 8C3 5 5 3 7 3H10.500C12 3 13 4.500 13 6L10.500 8Z" fill="#8fe0b0"/></svg>
<div style="position:absolute;left:6.2px;top:366.16px;width:26.7px;height:22.63px;background:rgba(34,34,34,0.86);border-radius:0 0 0 0;"></div>
<svg style="position:absolute;left:9.8px;top:367.72px;" width="19.5" height="19.5" viewBox="0 0 16 16"><path d="M3 5.500H10.500V13H3ZM3 5.500L5.500 3H13L10.500 5.500M13 3V10.500L10.500 13" stroke="#e6e6e6" stroke-width="0.9" fill="none"/><path d="M6.800 5.500V13M6.800 5.500L9.300 3" stroke="#8fe0b0" stroke-width="1.100" fill="none"/></svg>
<svg style="position:absolute;left:28.299999999999997px;top:384.19px;" width="3.2" height="3.2" viewBox="0 0 3.2 3.2"><path d="M3.200 0V3.200H0Z" fill="#8a8a8a"/></svg>
<div style="position:absolute;left:6.2px;top:389.49px;width:26.7px;height:22.63px;background:rgba(34,34,34,0.86);border-radius:0 0 0 0;"></div>
<svg style="position:absolute;left:9.8px;top:391.05px;" width="19.5" height="19.5" viewBox="0 0 16 16"><path d="M3 5.500H10.500V13H3ZM3 5.500L5.500 3H13L10.500 5.500M13 3V10.500L10.500 13" stroke="#e6e6e6" stroke-width="0.9" fill="none"/><path d="M8.600 3.400L5 6.400L8.200 12.600" stroke="#8fe0b0" stroke-width="1" fill="none"/><circle cx="8.600" cy="3.400" r="0.900" fill="#8fe0b0"/><circle cx="8.200" cy="12.600" r="0.900" fill="#8fe0b0"/></svg>
<svg style="position:absolute;left:28.299999999999997px;top:407.52px;" width="3.2" height="3.2" viewBox="0 0 3.2 3.2"><path d="M3.200 0V3.200H0Z" fill="#8a8a8a"/></svg>
<div style="position:absolute;left:6.2px;top:412.82px;width:26.7px;height:22.63px;background:rgba(34,34,34,0.86);border-radius:0 0 0 0;"></div>
<svg style="position:absolute;left:9.8px;top:414.38px;" width="19.5" height="19.5" viewBox="0 0 16 16"><path d="M3.400 8L7 3.400L12.400 5.200V12.800H4Z" fill="#8fe0b0"/><g fill="#e6e6e6"><circle cx="3.400" cy="8" r="1"/><circle cx="7" cy="3.400" r="1"/><circle cx="12.400" cy="5.200" r="1"/><circle cx="12.400" cy="12.800" r="1"/><circle cx="4" cy="12.800" r="1"/></g></svg>
<div style="position:absolute;left:6.2px;top:436.15px;width:26.7px;height:22.63px;background:rgba(34,34,34,0.86);border-radius:0 0 0 0;"></div>
<svg style="position:absolute;left:9.8px;top:437.71px;" width="19.5" height="19.5" viewBox="0 0 16 16"><path d="M8 9L8 2.600A6.400 6.400 0 1 0 14 11.200Z" fill="#8fe0b0"/><path d="M8 9L3 5M8 9L1.800 10.200M8 9L5.400 14.800M8 9L11 14.600" stroke="#1a2a20" stroke-width="0.600"/><path d="M9.400 7.600V2.400L12.400 4.400V7L14.200 9.600" stroke="#e6e6e6" stroke-width="0.8" fill="none"/></svg>
<svg style="position:absolute;left:28.299999999999997px;top:454.18px;" width="3.2" height="3.2" viewBox="0 0 3.2 3.2"><path d="M3.200 0V3.200H0Z" fill="#8a8a8a"/></svg>
<div style="position:absolute;left:6.2px;top:459.48px;width:26.7px;height:22.63px;background:rgba(34,34,34,0.86);border-radius:0 0 0 0;"></div>
<svg style="position:absolute;left:9.8px;top:461.04px;" width="19.5" height="19.5" viewBox="0 0 16 16"><path d="M3 6.500C3 4 5 3 8 3S13 4 13 6.500V10.500C13 13 11 14 8 14S3 13 3 10.500Z" fill="#d4b4e6"/><path d="M3 7.500C5 8.800 11 8.800 13 7.500M8.200 8.400V14" stroke="#6a5a78" stroke-width="0.600" fill="none"/></svg>
<svg style="position:absolute;left:28.299999999999997px;top:477.51px;" width="3.2" height="3.2" viewBox="0 0 3.2 3.2"><path d="M3.200 0V3.200H0Z" fill="#8a8a8a"/></svg>
<div style="position:absolute;left:6.2px;top:482.81px;width:26.7px;height:22.63px;background:rgba(34,34,34,0.86);border-radius:0 0 0 0;"></div>
<svg style="position:absolute;left:9.8px;top:484.37px;" width="19.5" height="19.5" viewBox="0 0 16 16"><path d="M3 5.500H10.500V13H3ZM3 5.500L5.500 3H13L10.500 5.500M13 3V10.500L10.500 13" stroke="#d8d8d8" stroke-width="0.9" fill="none"/><path d="M4.600 6.800V13M4.600 6.800L7 4.400" stroke="#d4b4e6" stroke-width="0.9" fill="none"/><circle cx="2.600" cy="2.800" r="0.900" fill="#d4b4e6"/></svg>
<svg style="position:absolute;left:28.299999999999997px;top:500.84px;" width="3.2" height="3.2" viewBox="0 0 3.2 3.2"><path d="M3.200 0V3.200H0Z" fill="#8a8a8a"/></svg>
<div style="position:absolute;left:6.2px;top:506.14px;width:26.7px;height:22.63px;background:rgba(34,34,34,0.86);border-radius:0 0 0 0;"></div>
<svg style="position:absolute;left:9.8px;top:507.7px;" width="19.5" height="19.5" viewBox="0 0 16 16"><path d="M8 2L9.600 4.200H6.400ZM8 14L9.600 11.800H6.400ZM2 8L4.200 6.400V9.600ZM14 8L11.800 6.400V9.600Z" fill="#d4b4e6"/><circle cx="8" cy="8" r="2.900" fill="#d4b4e6"/><path d="M6.200 6.200L9.800 9.800M9.800 6.200L6.200 9.800" stroke="#2a2230" stroke-width="0.9"/></svg>
<svg style="position:absolute;left:28.299999999999997px;top:524.17px;" width="3.2" height="3.2" viewBox="0 0 3.2 3.2"><path d="M3.200 0V3.200H0Z" fill="#8a8a8a"/></svg>
<div style="position:absolute;left:6.2px;top:529.47px;width:26.7px;height:22.63px;background:rgba(34,34,34,0.86);border-radius:0 0 0 0;"></div>
<svg style="position:absolute;left:9.8px;top:531.03px;" width="19.5" height="19.5" viewBox="0 0 16 16"><path d="M2 6.500L9 4L14 10L7 13Z" fill="#d4b4e6"/><path d="M2 6.500V8.500L7 14.600V13M7 14.600L14 11.600V10" stroke="#d4b4e6" stroke-width="0.700" fill="none"/><path d="M12.500 1.500V4.100M11.200 2.800H13.800" stroke="#d4b4e6" stroke-width="0.9"/></svg>
<svg style="position:absolute;left:28.299999999999997px;top:547.5px;" width="3.2" height="3.2" viewBox="0 0 3.2 3.2"><path d="M3.200 0V3.200H0Z" fill="#8a8a8a"/></svg>
<div style="position:absolute;left:6.2px;top:552.8px;width:26.7px;height:22.63px;background:rgba(34,34,34,0.86);border-radius:0 0 3px 3px;"></div>
<svg style="position:absolute;left:9.8px;top:554.36px;" width="19.5" height="19.5" viewBox="0 0 16 16"><path d="M4.600 6H11V12.600H5.400L2 10.400L4.600 9.600ZM4.600 6L7 3.600H13.400L11 6M13.400 3.600V10.200L11 12.600" stroke="#e6e6e6" stroke-width="0.9" fill="none"/><path d="M1.600 9.800L3.200 11.600" stroke="#d4b4e6" stroke-width="1"/></svg>
<svg style="position:absolute;left:28.299999999999997px;top:570.83px;" width="3.2" height="3.2" viewBox="0 0 3.2 3.2"><path d="M3.200 0V3.200H0Z" fill="#8a8a8a"/></svg>
<div style="position:absolute;left:1059.3px;top:33px;width:218.5px;height:216px;background:#282828;border-radius:3px;"></div>
<div style="position:absolute;left:1059.3px;top:33px;width:218.5px;height:17.6px;background:#2a2a2a;border-radius:3px 3px 0 0;"></div>
<div style="position:absolute;left:1065.6px;top:35.5px;width:18.8px;height:11.8px;background:#262626;border-radius:3px;"></div>
<svg style="position:absolute;left:1067px;top:36.8px;" width="10" height="9.5" viewBox="0 0 10 9.5"><rect x="0.600" y="0.600" width="3" height="2" fill="#e0e0e0"/><path d="M2 3V8H3.600M2 5.200H3.600" stroke="#9a9a9a" stroke-width="0.600" fill="none"/><rect x="4.200" y="4" width="5" height="1.900" fill="#e0e0e0"/><rect x="4.200" y="7" width="5" height="1.900" fill="#e0e0e0"/></svg>
<svg style="position:absolute;left:1078px;top:39.8px;" width="6" height="4" viewBox="0 0 6 4"><path d="M0.700 0.800L3 3.100L5.300 0.800" stroke="#bdbdbd" stroke-width="0.9" fill="none"/></svg>
<div style="position:absolute;left:1091px;top:35.5px;width:18.6px;height:11.8px;background:#262626;border-radius:3px;"></div>
<svg style="position:absolute;left:1092.3px;top:36.6px;" width="10.5" height="9.5" viewBox="0 0 10.5 9.5"><path d="M0.800 2.600H6.600V8.400H0.800Z" fill="#d6d6d6"/><path d="M2.300 2V0.800H8.600V6.600H7.200" stroke="#d6d6d6" stroke-width="0.800" fill="none"/><path d="M1.600 7.600L3.600 4.600L4.800 6.300L5.400 5.600L6.200 7.600Z" fill="#282828"/></svg>
<svg style="position:absolute;left:1103px;top:39.8px;" width="6" height="4" viewBox="0 0 6 4"><path d="M0.700 0.800L3 3.100L5.300 0.800" stroke="#bdbdbd" stroke-width="0.9" fill="none"/></svg>
<div style="position:absolute;left:1125.4px;top:35.5px;width:73px;height:11.8px;background:#1d1d1d;border-radius:3px;"></div>
<svg style="position:absolute;left:1128px;top:36.6px;" width="10" height="10" viewBox="0 0 10 10"><circle cx="6" cy="3.800" r="2.700" fill="none" stroke="#d6d6d6" stroke-width="0.900"/><path d="M4 5.800L1 8.800" stroke="#d6d6d6" stroke-width="1.100"/></svg>
<div style="position:absolute;left:1236.8px;top:35.5px;width:20.6px;height:11.8px;background:#262626;border-radius:3px;"></div>
<svg style="position:absolute;left:1239.4px;top:37px;" width="9" height="9" viewBox="0 0 9 9"><path d="M0.600 0.800H8L5 4.600V8.200L3.600 7.200V4.600Z" stroke="#dcdcdc" stroke-width="0.800" fill="none"/></svg>
<svg style="position:absolute;left:1250.4px;top:39.8px;" width="6" height="4" viewBox="0 0 6 4"><path d="M0.700 0.800L3 3.100L5.300 0.800" stroke="#bdbdbd" stroke-width="0.9" fill="none"/></svg>
<div style="position:absolute;left:1261.4px;top:35.5px;width:12.6px;height:11.8px;background:#4b4b4b;border-radius:3px;"></div>
<svg style="position:absolute;left:1262.6px;top:36.6px;" width="10.5" height="10" viewBox="0 0 10.5 10"><path d="M1.200 3.200H7.400V4.800H1.200ZM1.800 4.800V8.800H6.800V4.800" stroke="#d8d8d8" stroke-width="0.800" fill="none"/><path d="M3.400 6.400H5.200" stroke="#d8d8d8" stroke-width="0.700"/><circle cx="8" cy="2.200" r="1.900" fill="#f0f0f0"/><path d="M8 1.200V3.200M7 2.200H9" stroke="#4b4b4b" stroke-width="0.500"/></svg>
<div style="position:absolute;left:1059.3px;top:90.3325px;width:218.5px;height:13.533px;background:#1d314f;"></div>
<div style="position:absolute;left:1059.3px;top:103.6655px;width:218.5px;height:13.533px;background:#1d314f;"></div>
<div style="position:absolute;left:1059.3px;top:116.9985px;width:218.5px;height:13.533px;background:#334d80;"></div>
<div style="position:absolute;left:1059.3px;top:130.33149999999998px;width:218.5px;height:13.533px;background:#1d314f;"></div>
<div style="position:absolute;left:1078.3px;top:79.8px;width:0.7px;height:78px;background:#4a4a4a;"></div>
<svg style="position:absolute;left:1074px;top:52.9px;" width="9.6" height="9.2" viewBox="0 0 9.6 9.2"><path d="M0.600 0.800H9V3.200H0.600ZM1.300 3.200V8.400H8.300V3.200Z" fill="#e4e4e4"/><rect x="3.600" y="4.300" width="2.400" height="1" fill="#282828"/></svg>
<svg style="position:absolute;left:1075.8px;top:68.833px;" width="5" height="4.2" viewBox="0 0 5 4.2"><path d="M0.300 0.300H4.700L2.500 4Z" fill="#c8c8c8"/></svg>
<div style="position:absolute;left:1085.3px;top:64.633px;width:13.4px;height:12.4px;background:#494949;border-radius:2.500px;"></div>
<svg style="position:absolute;left:1087.2px;top:66.233px;" width="9.6" height="9.2" viewBox="0 0 9.6 9.2"><path d="M0.600 0.800H9V3.200H0.600ZM1.300 3.200V8.400H8.300V3.200Z" fill="#e4e4e4"/><rect x="3.600" y="4.300" width="2.400" height="1" fill="#494949"/></svg>
<div style="position:absolute;left:1237.8px;top:67.233px;width:7.3px;height:7.2px;background:#ececec;border-radius:0.800px;"></div>
<svg style="position:absolute;left:1237.8px;top:67.233px;" width="7.3" height="7.2" viewBox="0 0 7.3 7.2"><path d="M1.500 3.700L3 5.200L5.900 1.800" stroke="#222" stroke-width="1.100" fill="none"/></svg>
<svg style="position:absolute;left:1250.2px;top:67.233px;" width="9.4" height="7.2" viewBox="0 0 9.4 7.2"><path d="M0.600 3.600C2.200 0.600 7.200 0.600 8.800 3.600C7.200 6.600 2.200 6.600 0.600 3.600Z" fill="none" stroke="#e2e2e2" stroke-width="0.900"/><circle cx="4.700" cy="3.600" r="1.500" fill="#e2e2e2"/></svg>
<svg style="position:absolute;left:1263.7px;top:66.733px;" width="9.6" height="8" viewBox="0 0 9.6 8"><path d="M0.600 1.800H2.600L3.400 0.700H6.200L7 1.800H9V7.400H0.600Z" fill="#e2e2e2"/><circle cx="4.800" cy="4.500" r="1.900" fill="#282828"/><circle cx="4.800" cy="4.500" r="1" fill="#e2e2e2"/></svg>
<svg style="position:absolute;left:1090.2px;top:81.666px;" width="4" height="5" viewBox="0 0 4 5"><path d="M0.400 0.300L3.800 2.500L0.400 4.700Z" fill="#c8c8c8"/></svg>
<svg style="position:absolute;left:1099.5px;top:79.166px;" width="11" height="10" viewBox="0 0 11 10"><circle cx="3" cy="2.700" r="2.100" fill="#e08a3c"/><circle cx="7.300" cy="2.500" r="2.400" fill="#e08a3c"/><rect x="1.600" y="4.800" width="6.600" height="4.200" rx="0.600" fill="#e08a3c"/><path d="M8.400 6L10.400 4.900V9L8.400 7.900Z" fill="#e08a3c"/><circle cx="3" cy="2.700" r="0.800" fill="#282828"/><circle cx="7.300" cy="2.500" r="0.900" fill="#282828"/></svg>
<div style="position:absolute;left:1154.2px;top:77.866px;width:12.6px;height:12.6px;background:#38524a;border-radius:2.500px;"></div>
<svg style="position:absolute;left:1155.5px;top:79.166px;" width="10" height="10" viewBox="0 0 10 10"><circle cx="2.900" cy="2.900" r="1.700" fill="none" stroke="#22c9a0" stroke-width="0.900"/><circle cx="6.700" cy="2.800" r="2" fill="none" stroke="#22c9a0" stroke-width="0.900"/><rect x="1.600" y="5.200" width="5.800" height="3.600" rx="0.600" fill="none" stroke="#22c9a0" stroke-width="0.900"/><path d="M7.600 6.400L9.400 5.400V8.600L7.600 7.600" fill="none" stroke="#22c9a0" stroke-width="0.800"/></svg>
<svg style="position:absolute;left:1250.2px;top:80.566px;" width="9.4" height="7.2" viewBox="0 0 9.4 7.2"><path d="M0.600 3.600C2.200 0.600 7.200 0.600 8.800 3.600C7.200 6.600 2.200 6.600 0.600 3.600Z" fill="none" stroke="#e2e2e2" stroke-width="0.900"/><circle cx="4.700" cy="3.600" r="1.500" fill="#e2e2e2"/></svg>
<svg style="position:absolute;left:1263.7px;top:80.066px;" width="9.6" height="8" viewBox="0 0 9.6 8"><path d="M0.600 1.800H2.600L3.400 0.700H6.200L7 1.800H9V7.400H0.600Z" fill="#e2e2e2"/><circle cx="4.800" cy="4.500" r="1.900" fill="#282828"/><circle cx="4.800" cy="4.500" r="1" fill="#e2e2e2"/></svg>
<svg style="position:absolute;left:1061.2px;top:92.79899999999999px;" width="10" height="9.4" viewBox="0 0 10 9.4"><path d="M1.600 2.600V7.800M1.600 7.800H5.800M2.600 1.600H4.400" stroke="#c8c8c8" stroke-width="0.700" fill="none"/><rect x="0.500" y="0.500" width="2.200" height="2.200" fill="none" stroke="#c8c8c8" stroke-width="0.600"/><rect x="0.500" y="6.700" width="2.200" height="2.200" fill="none" stroke="#c8c8c8" stroke-width="0.600"/><rect x="5.200" y="6.700" width="2.200" height="2.200" fill="none" stroke="#c8c8c8" stroke-width="0.600"/><rect x="5.600" y="0.300" width="3.800" height="3.200" fill="#f0f0f0"/></svg>
<svg style="position:absolute;left:1090.2px;top:94.999px;" width="4" height="5" viewBox="0 0 4 5"><path d="M0.400 0.300L3.800 2.500L0.400 4.700Z" fill="#c8c8c8"/></svg>
<div style="position:absolute;left:1098.4px;top:91.199px;width:14px;height:12.6px;background:#4d5a70;border-radius:2.500px;"></div>
<svg style="position:absolute;left:1100.6px;top:92.699px;" width="10" height="10" viewBox="0 0 10 10"><path d="M1 1.200H9L5 9Z" fill="none" stroke="#e08a3c" stroke-width="1.500" stroke-linejoin="round"/></svg>
<div style="position:absolute;left:1144.6px;top:91.199px;width:12.6px;height:12.6px;background:#2c5a64;border-radius:2.500px;"></div>
<svg style="position:absolute;left:1145.8999999999999px;top:92.59899999999999px;" width="10" height="10" viewBox="0 0 10 10"><path d="M1.400 1.400H8.600L5 8.400Z" fill="none" stroke="#22c9a0" stroke-width="0.900"/><circle cx="1.400" cy="1.400" r="0.900" fill="#22c9a0"/><circle cx="8.600" cy="1.400" r="0.900" fill="#22c9a0"/><circle cx="5" cy="8.400" r="0.900" fill="#22c9a0"/></svg>
<svg style="position:absolute;left:1250.2px;top:93.899px;" width="9.4" height="7.2" viewBox="0 0 9.4 7.2"><path d="M0.600 3.600C2.200 0.600 7.200 0.600 8.800 3.600C7.200 6.600 2.200 6.600 0.600 3.600Z" fill="none" stroke="#e2e2e2" stroke-width="0.900"/><circle cx="4.700" cy="3.600" r="1.500" fill="#e2e2e2"/></svg>
<svg style="position:absolute;left:1263.7px;top:93.399px;" width="9.6" height="8" viewBox="0 0 9.6 8"><path d="M0.600 1.800H2.600L3.400 0.700H6.200L7 1.800H9V7.400H0.600Z" fill="#e2e2e2"/><circle cx="4.800" cy="4.500" r="1.900" fill="#1d314f"/><circle cx="4.800" cy="4.500" r="1" fill="#e2e2e2"/></svg>
<svg style="position:absolute;left:1061.2px;top:106.13199999999999px;" width="10" height="9.4" viewBox="0 0 10 9.4"><path d="M1.600 2.600V7.800M1.600 7.800H5.800M2.600 1.600H4.400" stroke="#c8c8c8" stroke-width="0.700" fill="none"/><rect x="0.500" y="0.500" width="2.200" height="2.200" fill="none" stroke="#c8c8c8" stroke-width="0.600"/><rect x="0.500" y="6.700" width="2.200" height="2.200" fill="none" stroke="#c8c8c8" stroke-width="0.600"/><rect x="5.200" y="6.700" width="2.200" height="2.200" fill="none" stroke="#c8c8c8" stroke-width="0.600"/><rect x="5.600" y="0.300" width="3.800" height="3.200" fill="#f0f0f0"/></svg>
<svg style="position:absolute;left:1090.2px;top:108.332px;" width="4" height="5" viewBox="0 0 4 5"><path d="M0.400 0.300L3.800 2.500L0.400 4.700Z" fill="#c8c8c8"/></svg>
<svg style="position:absolute;left:1100.6px;top:106.032px;" width="10" height="10" viewBox="0 0 10 10"><path d="M1 1.200H9L5 9Z" fill="none" stroke="#e08a3c" stroke-width="1.500" stroke-linejoin="round"/></svg>
<div style="position:absolute;left:1161.2px;top:104.532px;width:12.6px;height:12.6px;background:#2c5a64;border-radius:2.500px;"></div>
<svg style="position:absolute;left:1162.5px;top:105.93199999999999px;" width="10" height="10" viewBox="0 0 10 10"><path d="M1.400 1.400H8.600L5 8.400Z" fill="none" stroke="#22c9a0" stroke-width="0.900"/><circle cx="1.400" cy="1.400" r="0.900" fill="#22c9a0"/><circle cx="8.600" cy="1.400" r="0.900" fill="#22c9a0"/><circle cx="5" cy="8.400" r="0.900" fill="#22c9a0"/></svg>
<svg style="position:absolute;left:1250.2px;top:107.232px;" width="9.4" height="7.2" viewBox="0 0 9.4 7.2"><path d="M0.600 3.600C2.200 0.600 7.200 0.600 8.800 3.600C7.200 6.600 2.200 6.600 0.600 3.600Z" fill="none" stroke="#e2e2e2" stroke-width="0.900"/><circle cx="4.700" cy="3.600" r="1.500" fill="#e2e2e2"/></svg>
<svg style="position:absolute;left:1263.7px;top:106.732px;" width="9.6" height="8" viewBox="0 0 9.6 8"><path d="M0.600 1.800H2.600L3.400 0.700H6.200L7 1.800H9V7.400H0.600Z" fill="#e2e2e2"/><circle cx="4.800" cy="4.500" r="1.900" fill="#1d314f"/><circle cx="4.800" cy="4.500" r="1" fill="#e2e2e2"/></svg>
<svg style="position:absolute;left:1061.2px;top:119.465px;" width="10" height="9.4" viewBox="0 0 10 9.4"><path d="M1.600 2.600V7.800M1.600 7.800H5.800M2.600 1.600H4.400" stroke="#c8c8c8" stroke-width="0.700" fill="none"/><rect x="0.500" y="0.500" width="2.200" height="2.200" fill="none" stroke="#c8c8c8" stroke-width="0.600"/><rect x="0.500" y="6.700" width="2.200" height="2.200" fill="none" stroke="#c8c8c8" stroke-width="0.600"/><rect x="5.200" y="6.700" width="2.200" height="2.200" fill="none" stroke="#c8c8c8" stroke-width="0.600"/><rect x="5.600" y="0.300" width="3.800" height="3.200" fill="#f0f0f0"/></svg>
<svg style="position:absolute;left:1090.2px;top:121.665px;" width="4" height="5" viewBox="0 0 4 5"><path d="M0.400 0.300L3.800 2.500L0.400 4.700Z" fill="#c8c8c8"/></svg>
<svg style="position:absolute;left:1100.6px;top:119.36500000000001px;" width="10" height="10" viewBox="0 0 10 10"><path d="M1 1.200H9L5 9Z" fill="none" stroke="#e08a3c" stroke-width="1.500" stroke-linejoin="round"/></svg>
<div style="position:absolute;left:1161.2px;top:117.86500000000001px;width:12.6px;height:12.6px;background:#3a6a86;border-radius:2.500px;"></div>
<svg style="position:absolute;left:1162.5px;top:119.265px;" width="10" height="10" viewBox="0 0 10 10"><path d="M1.400 1.400H8.600L5 8.400Z" fill="none" stroke="#22c9a0" stroke-width="0.900"/><circle cx="1.400" cy="1.400" r="0.900" fill="#22c9a0"/><circle cx="8.600" cy="1.400" r="0.900" fill="#22c9a0"/><circle cx="5" cy="8.400" r="0.900" fill="#22c9a0"/></svg>
<svg style="position:absolute;left:1250.2px;top:120.56500000000001px;" width="9.4" height="7.2" viewBox="0 0 9.4 7.2"><path d="M0.600 3.600C2.200 0.600 7.200 0.600 8.800 3.600C7.200 6.600 2.200 6.600 0.600 3.600Z" fill="none" stroke="#e2e2e2" stroke-width="0.900"/><circle cx="4.700" cy="3.600" r="1.500" fill="#e2e2e2"/></svg>
<svg style="position:absolute;left:1263.7px;top:120.06500000000001px;" width="9.6" height="8" viewBox="0 0 9.6 8"><path d="M0.600 1.800H2.600L3.400 0.700H6.200L7 1.800H9V7.400H0.600Z" fill="#e2e2e2"/><circle cx="4.800" cy="4.500" r="1.900" fill="#334d80"/><circle cx="4.800" cy="4.500" r="1" fill="#e2e2e2"/></svg>
<svg style="position:absolute;left:1061.2px;top:132.798px;" width="10" height="9.4" viewBox="0 0 10 9.4"><path d="M1.600 2.600V7.800M1.600 7.800H5.800M2.600 1.600H4.400" stroke="#c8c8c8" stroke-width="0.700" fill="none"/><rect x="0.500" y="0.500" width="2.200" height="2.200" fill="none" stroke="#c8c8c8" stroke-width="0.600"/><rect x="0.500" y="6.700" width="2.200" height="2.200" fill="none" stroke="#c8c8c8" stroke-width="0.600"/><rect x="5.200" y="6.700" width="2.200" height="2.200" fill="none" stroke="#c8c8c8" stroke-width="0.600"/><rect x="5.600" y="0.300" width="3.800" height="3.200" fill="#f0f0f0"/></svg>
<svg style="position:absolute;left:1090.2px;top:134.998px;" width="4" height="5" viewBox="0 0 4 5"><path d="M0.400 0.300L3.800 2.500L0.400 4.700Z" fill="#c8c8c8"/></svg>
<svg style="position:absolute;left:1100.6px;top:132.69799999999998px;" width="10" height="10" viewBox="0 0 10 10"><path d="M1 1.200H9L5 9Z" fill="none" stroke="#e08a3c" stroke-width="1.500" stroke-linejoin="round"/></svg>
<div style="position:absolute;left:1161.2px;top:131.19799999999998px;width:12.6px;height:12.6px;background:#2c5a64;border-radius:2.500px;"></div>
<svg style="position:absolute;left:1162.5px;top:132.59799999999998px;" width="10" height="10" viewBox="0 0 10 10"><path d="M1.400 1.400H8.600L5 8.400Z" fill="none" stroke="#22c9a0" stroke-width="0.900"/><circle cx="1.400" cy="1.400" r="0.900" fill="#22c9a0"/><circle cx="8.600" cy="1.400" r="0.900" fill="#22c9a0"/><circle cx="5" cy="8.400" r="0.900" fill="#22c9a0"/></svg>
<svg style="position:absolute;left:1250.2px;top:133.898px;" width="9.4" height="7.2" viewBox="0 0 9.4 7.2"><path d="M0.600 3.600C2.200 0.600 7.200 0.600 8.800 3.600C7.200 6.600 2.200 6.600 0.600 3.600Z" fill="none" stroke="#e2e2e2" stroke-width="0.900"/><circle cx="4.700" cy="3.600" r="1.500" fill="#e2e2e2"/></svg>
<svg style="position:absolute;left:1263.7px;top:133.398px;" width="9.6" height="8" viewBox="0 0 9.6 8"><path d="M0.600 1.800H2.600L3.400 0.700H6.200L7 1.800H9V7.400H0.600Z" fill="#e2e2e2"/><circle cx="4.800" cy="4.500" r="1.900" fill="#1d314f"/><circle cx="4.800" cy="4.500" r="1" fill="#e2e2e2"/></svg>
<svg style="position:absolute;left:1090.2px;top:148.33100000000002px;" width="4" height="5" viewBox="0 0 4 5"><path d="M0.400 0.300L3.800 2.500L0.400 4.700Z" fill="#c8c8c8"/></svg>
<svg style="position:absolute;left:1100.4px;top:145.63100000000003px;" width="10" height="10.5" viewBox="0 0 10 10.5"><path d="M5 0.600A3.800 3.800 0 0 1 7.400 7.200V8.600H2.600V7.200A3.800 3.800 0 0 1 5 0.600Z" fill="#e08a3c"/><path d="M3.200 9.700H6.800" stroke="#e08a3c" stroke-width="0.900"/><path d="M3.600 3.600L5 5.600L6.400 3.600" stroke="#282828" stroke-width="0.700" fill="none"/></svg>
<svg style="position:absolute;left:1146.2px;top:145.83100000000002px;" width="10" height="10" viewBox="0 0 10 10"><circle cx="5" cy="5" r="4" fill="none" stroke="#1fae86" stroke-width="0.900"/><circle cx="5" cy="5" r="1.200" fill="#1fae86"/></svg>
<svg style="position:absolute;left:1250.2px;top:147.23100000000002px;" width="9.4" height="7.2" viewBox="0 0 9.4 7.2"><path d="M0.600 3.600C2.200 0.600 7.200 0.600 8.800 3.600C7.200 6.600 2.200 6.600 0.600 3.600Z" fill="none" stroke="#e2e2e2" stroke-width="0.900"/><circle cx="4.700" cy="3.600" r="1.500" fill="#e2e2e2"/></svg>
<svg style="position:absolute;left:1263.7px;top:146.73100000000002px;" width="9.6" height="8" viewBox="0 0 9.6 8"><path d="M0.600 1.800H2.600L3.400 0.700H6.200L7 1.800H9V7.400H0.600Z" fill="#e2e2e2"/><circle cx="4.800" cy="4.500" r="1.900" fill="#282828"/><circle cx="4.800" cy="4.500" r="1" fill="#e2e2e2"/></svg>
<div style="position:absolute;left:1059.3px;top:250.5px;width:218.5px;height:455px;background:#303030;border-radius:3px;"></div>
<div style="position:absolute;left:1059.3px;top:250.5px;width:218.5px;height:17px;background:#2c2c2c;border-radius:3px 3px 0 0;"></div>
<div style="position:absolute;left:1059.3px;top:267.4px;width:17.8px;height:438.1px;background:#1c1c1c;border-radius:0 0 0 3px;"></div>
<svg style="position:absolute;left:1066px;top:253.8px;" width="11" height="10" viewBox="0 0 11 10"><rect x="0.500" y="0.800" width="9.500" height="3.400" rx="1.700" fill="#e0e0e0"/><rect x="0.500" y="5.600" width="9.500" height="3.400" rx="1.700" fill="#e0e0e0"/><rect x="4.400" y="1.600" width="4.600" height="1.800" rx="0.900" fill="#2c2c2c"/><circle cx="7.600" cy="7.300" r="1.100" fill="#2c2c2c"/></svg>
<svg style="position:absolute;left:1078.2px;top:257.4px;" width="6" height="4" viewBox="0 0 6 4"><path d="M0.700 0.800L3 3.100L5.300 0.800" stroke="#bdbdbd" stroke-width="0.9" fill="none"/></svg>
<div style="position:absolute;left:1133.8px;top:253.2px;width:72.4px;height:11.2px;background:#1d1d1d;border-radius:3px;"></div>
<svg style="position:absolute;left:1136.4px;top:254px;" width="10" height="10" viewBox="0 0 10 10"><circle cx="6" cy="3.800" r="2.700" fill="none" stroke="#d6d6d6" stroke-width="0.900"/><path d="M4 5.800L1 8.800" stroke="#d6d6d6" stroke-width="1.100"/></svg>
<div style="position:absolute;left:1262.6px;top:253.2px;width:11.4px;height:11.2px;background:#232323;border-radius:3px;"></div>
<svg style="position:absolute;left:1265.3px;top:257.2px;" width="6" height="4" viewBox="0 0 6 4"><path d="M0.700 0.800L3 3.100L5.300 0.800" stroke="#bdbdbd" stroke-width="0.9" fill="none"/></svg>
<div style="position:absolute;left:1059.3px;top:531px;width:17.8px;height:18.8px;background:#303030;border-radius:3px 0 0 3px;"></div>
<svg style="position:absolute;left:1062.7px;top:275.5px;" width="11" height="11" viewBox="0 0 11 11"><path d="M2.600 1V6.400M2.600 6.400L1.200 7.400V10.200H4V7.400Z" stroke="#d8d8d8" stroke-width="1.100" fill="#d8d8d8"/><path d="M6.400 1V3.400L7.800 4.800V10.200M9.400 1V3.400L7.800 4.800" stroke="#d8d8d8" stroke-width="1.300" fill="none"/></svg>
<svg style="position:absolute;left:1062.7px;top:300.1px;" width="11" height="11" viewBox="0 0 11 11"><path d="M1 3.600H3L3.800 2.400H6.400L7 3.600H10V9.400H1Z" fill="none" stroke="#cfcfcf" stroke-width="0.900"/><rect x="7" y="1" width="2.600" height="1.600" fill="#cfcfcf"/></svg>
<svg style="position:absolute;left:1062.7px;top:318.8px;" width="11" height="11" viewBox="0 0 11 11"><path d="M1.200 2H9.800V5.400H1.200Z" fill="#cfcfcf"/><path d="M2.600 5.400V9.600H8.400V5.400" fill="none" stroke="#cfcfcf" stroke-width="0.900"/><path d="M4 7H7" stroke="#cfcfcf" stroke-width="0.800"/></svg>
<svg style="position:absolute;left:1062.7px;top:337.5px;" width="11" height="11" viewBox="0 0 11 11"><path d="M1 3.400H7.400V9.600H1Z" fill="#bdbdbd"/><path d="M2.600 2.800V1.600H9.400V8H8.200" stroke="#bdbdbd" stroke-width="0.800" fill="none"/><path d="M1.800 8.800L4 5.600L5.200 7.300L5.800 6.600L6.600 8.800Z" fill="#1c1c1c"/></svg>
<svg style="position:absolute;left:1062.7px;top:356.1px;" width="11" height="11" viewBox="0 0 11 11"><path d="M3.400 1L5.400 4.200C6.100 5.500 5.300 6.800 3.900 6.800S1.600 5.500 2.300 4.200ZM7.200 0.600L8.400 2.400C8.700 3.100 8.400 3.800 7.600 3.800" fill="#cfcfcf"/><circle cx="7" cy="7.400" r="2.300" fill="none" stroke="#cfcfcf" stroke-width="0.900"/><path d="M1 9H4.400" stroke="#cfcfcf" stroke-width="0.900"/></svg>
<svg style="position:absolute;left:1062.7px;top:374.8px;" width="11" height="11" viewBox="0 0 11 11"><circle cx="5.500" cy="5.500" r="4.200" fill="none" stroke="#e0485a" stroke-width="1"/><path d="M3 3.200C4.400 3.800 4.800 5 4 6.200S4.600 8.600 5.600 9.400M6.400 1.600C6 3 7 3.800 8.200 3.600S9.600 5.200 9.200 6.600" stroke="#e0485a" stroke-width="0.800" fill="none"/></svg>
<svg style="position:absolute;left:1062.7px;top:399.1px;" width="11" height="11" viewBox="0 0 11 11"><path d="M1 1.400H10V4.200H1ZM1.800 4.200V9.800H9.200V4.200Z" fill="#e0e0e0"/><rect x="4" y="5.600" width="3" height="1.100" fill="#1c1c1c"/></svg>
<svg style="position:absolute;left:1062.7px;top:422.8px;" width="11" height="11" viewBox="0 0 11 11"><rect x="2.600" y="2.600" width="5.800" height="5.800" fill="#e8924a"/><path d="M0.800 3V0.800H3M8 0.800H10.200V3M10.200 8V10.200H8M3 10.200H0.800V8" stroke="#e8924a" stroke-width="0.900" fill="none"/></svg>
<svg style="position:absolute;left:1062.7px;top:441.5px;" width="11" height="11" viewBox="0 0 11 11"><path d="M9.800 2.200L7.800 4.200L6.800 3.200L8.800 1.200C7.600 0.700 6.200 1 5.400 2.200C4.800 3.200 4.800 4.200 5.200 5L1.200 9C0.800 9.600 1.400 10.200 2 9.800L6 5.800C6.800 6.200 8 6.200 8.800 5.600C10 4.800 10.300 3.400 9.800 2.200Z" fill="#4d8ef0"/></svg>
<svg style="position:absolute;left:1062.7px;top:460.2px;" width="11" height="11" viewBox="0 0 11 11"><path d="M2 2L8.600 8.600M2 2L9.400 3.200M2 2L3.200 9.400" stroke="#4d8ef0" stroke-width="0.900" fill="none"/><circle cx="2" cy="2" r="1.300" fill="#4d8ef0"/><path d="M7.400 9L9 7.400V9Z" fill="#4d8ef0"/></svg>
<svg style="position:absolute;left:1062.7px;top:478.8px;" width="11" height="11" viewBox="0 0 11 11"><circle cx="5.500" cy="5.500" r="4.200" fill="none" stroke="#4d8ef0" stroke-width="0.900"/><circle cx="5.500" cy="5.500" r="1.800" fill="#4d8ef0"/></svg>
<svg style="position:absolute;left:1062.7px;top:497.5px;" width="11" height="11" viewBox="0 0 11 11"><circle cx="4.800" cy="6.200" r="3.300" fill="none" stroke="#4d8ef0" stroke-width="0.900"/><circle cx="4.800" cy="6.200" r="1.400" fill="#4d8ef0"/><path d="M7 3.600C8.400 2.200 10.200 3 9.800 4.800" stroke="#4d8ef0" stroke-width="0.900" fill="none"/></svg>
<svg style="position:absolute;left:1062.7px;top:516.2px;" width="11" height="11" viewBox="0 0 11 11"><path d="M1.600 1.800H9.400L5.500 9.600Z" fill="none" stroke="#22c9a0" stroke-width="0.900"/><circle cx="1.600" cy="1.800" r="1" fill="#22c9a0"/><circle cx="9.400" cy="1.800" r="1" fill="#22c9a0"/><circle cx="5.500" cy="9.600" r="1" fill="#22c9a0"/></svg>
<svg style="position:absolute;left:1062.7px;top:534.8px;" width="11" height="11" viewBox="0 0 11 11"><circle cx="5.500" cy="5.500" r="4.400" fill="#e8586a"/><path d="M5.500 1.100A4.400 4.400 0 0 1 9.900 5.500H5.500ZM5.500 5.500V9.900A4.400 4.400 0 0 1 1.100 5.500Z" fill="#8c2c3a"/></svg>
<svg style="position:absolute;left:1084.4px;top:274.6px;" width="10" height="10" viewBox="0 0 10 10"><rect x="2.600" y="2.600" width="4.800" height="4.800" fill="#e6e6e6"/><path d="M0.600 2.600V0.600H2.600M7.400 0.600H9.400V2.600M9.400 7.400V9.400H7.400M2.600 9.400H0.600V7.400" stroke="#bdbdbd" stroke-width="0.800" fill="none"/></svg>
<svg style="position:absolute;left:1128.6px;top:276.6px;" width="5" height="6.4" viewBox="0 0 5 6.4"><path d="M1 0.600L3.800 3.200L1 5.800" stroke="#bdbdbd" stroke-width="0.900" fill="none"/></svg>
<svg style="position:absolute;left:1138.4px;top:274.6px;" width="10" height="10" viewBox="0 0 10 10"><circle cx="5" cy="5" r="4.200" fill="#e6e6e6"/><path d="M5 0.800A4.200 4.200 0 0 1 9.200 5H5ZM5 5V9.200A4.200 4.200 0 0 1 0.800 5Z" fill="#303030"/><circle cx="5" cy="5" r="4.200" fill="none" stroke="#e6e6e6" stroke-width="0.700"/></svg>
<svg style="position:absolute;left:1263.6px;top:274.8px;" width="10" height="10" viewBox="0 0 10 10"><path d="M5.600 0.800L9.200 4.400L8 4.600L6.400 6.200L6 8.200L1.800 4L3.800 3.600L5.400 2Z" fill="none" stroke="#a8a8a8" stroke-width="0.800"/><path d="M3.800 6.200L1 9" stroke="#a8a8a8" stroke-width="0.900"/></svg>
<div style="position:absolute;left:1083.8px;top:298px;width:170px;height:51px;background:#282828;border-radius:3px;"></div>
<div style="position:absolute;left:1086.6px;top:300.4px;width:166px;height:12.6px;background:#46474c;border-radius:2px;"></div>
<div style="position:absolute;left:1089px;top:302.300px;width:8.800px;height:8.800px;border-radius:50%;background:radial-gradient(circle at 35% 30%,#7fb0ff 0%,#1f5ce8 35%,#0a2a9a 100%)"></div>
<svg style="position:absolute;left:1090.2px;top:340.5px;" width="4" height="5" viewBox="0 0 4 5"><path d="M0.400 0.300L3.800 2.500L0.400 4.700Z" fill="#c8c8c8"/></svg>
<svg style="position:absolute;left:1172px;top:341.6px;" width="8" height="3" viewBox="0 0 8 3"><path d="M0 0.500H8M0 2.500H8" stroke="#5a5a5a" stroke-width="0.600"/></svg>
<div style="position:absolute;left:1262.2px;top:297.2px;width:12px;height:12.5px;background:#4b4b4b;border-radius:3px 3px 0 0;"></div>
<div style="position:absolute;left:1262.2px;top:310.1px;width:12px;height:12.5px;background:#4b4b4b;border-radius:0 0 3px 3px;"></div>
<svg style="position:absolute;left:1262.2px;top:297.2px;" width="12" height="12.5" viewBox="0 0 12 12.5"><path d="M6 3.200V9.200M3 6.200H9" stroke="#dcdcdc" stroke-width="0.800"/></svg>
<svg style="position:absolute;left:1262.2px;top:310.1px;" width="12" height="12.5" viewBox="0 0 12 12.5"><path d="M3 6.200H9" stroke="#dcdcdc" stroke-width="0.800"/></svg>
<div style="position:absolute;left:1262.2px;top:328.4px;width:12px;height:11.3px;background:#262626;border-radius:3px;"></div>
<svg style="position:absolute;left:1265.2px;top:332.2px;" width="6" height="4" viewBox="0 0 6 4"><path d="M0.700 0.800L3 3.100L5.300 0.800" stroke="#bdbdbd" stroke-width="0.9" fill="none"/></svg>
<div style="position:absolute;left:1084.8px;top:354.4px;width:18px;height:11.6px;background:#262626;border-radius:3px 0 0 3px;"></div>
<svg style="position:absolute;left:1086.2px;top:355.7px;" width="9" height="9" viewBox="0 0 10 10"><circle cx="5" cy="5" r="4.200" fill="#e6e6e6"/><path d="M5 0.800A4.200 4.200 0 0 1 9.200 5H5ZM5 5V9.200A4.200 4.200 0 0 1 0.800 5Z" fill="#262626"/><circle cx="5" cy="5" r="4.200" fill="none" stroke="#e6e6e6" stroke-width="0.700"/></svg>
<svg style="position:absolute;left:1096.2px;top:358.5px;" width="6" height="4" viewBox="0 0 6 4"><path d="M0.700 0.800L3 3.100L5.300 0.800" stroke="#bdbdbd" stroke-width="0.9" fill="none"/></svg>
<div style="position:absolute;left:1103.2px;top:354.4px;width:104.2px;height:11.6px;background:#1d1d1d;"></div>
<div style="position:absolute;left:1207.8px;top:354.4px;width:12.8px;height:11.6px;background:#464646;"></div>
<div style="position:absolute;left:1221px;top:354.4px;width:13.6px;height:11.6px;background:#464646;"></div>
<div style="position:absolute;left:1235px;top:354.4px;width:12.6px;height:11.6px;background:#464646;border-radius:0 3px 3px 0;"></div>
<svg style="position:absolute;left:1209.6px;top:355.7px;" width="9" height="9" viewBox="0 0 9 9"><path d="M4.500 0.800C5.600 1.600 6.800 1.800 8 1.800C8 5 7 7.200 4.500 8.400C2 7.200 1 5 1 1.800C2.200 1.800 3.400 1.600 4.500 0.800Z" stroke="#8a8a8a" stroke-width="0.800" fill="none"/></svg>
<svg style="position:absolute;left:1223.2px;top:355.6px;" width="9" height="9" viewBox="0 0 9 9"><path d="M1.200 3H5.200V8H1.200ZM3 3V1H6.400L8 2.600V6H5.200M6.400 1V2.600H8" stroke="#e0e0e0" stroke-width="0.800" fill="none"/></svg>
<svg style="position:absolute;left:1238.4px;top:357.3px;" width="6" height="6" viewBox="0 0 6 6"><path d="M0.800 0.800L5.200 5.200M5.200 0.800L0.800 5.200" stroke="#d0d0d0" stroke-width="0.900" fill="none"/></svg>
<div style="position:absolute;left:1255.8px;top:354.4px;width:17.4px;height:11.6px;background:#262626;border-radius:3px;"></div>
<svg style="position:absolute;left:1257.4px;top:355.4px;" width="10" height="10" viewBox="0 0 10 10"><path d="M2 2H8L5 8.200Z" fill="none" stroke="#e0e0e0" stroke-width="0.800"/><circle cx="2" cy="2" r="1.100" fill="#262626" stroke="#e0e0e0" stroke-width="0.700"/><circle cx="8" cy="2" r="1.100" fill="#262626" stroke="#e0e0e0" stroke-width="0.700"/><circle cx="5" cy="8.200" r="1.100" fill="#262626" stroke="#e0e0e0" stroke-width="0.700"/></svg>
<svg style="position:absolute;left:1266.8px;top:358.5px;" width="6" height="4" viewBox="0 0 6 4"><path d="M0.700 0.800L3 3.100L5.300 0.800" stroke="#bdbdbd" stroke-width="0.9" fill="none"/></svg>
<div style="position:absolute;left:1083.2px;top:371.1px;width:63.2px;height:11.7px;background:#545454;border-radius:3px 0 0 3px;"></div>
<div style="position:absolute;left:1146.9px;top:371.1px;width:63.2px;height:11.7px;background:#545454;"></div>
<div style="position:absolute;left:1210.6px;top:371.1px;width:63.6px;height:11.7px;background:#545454;border-radius:0 3px 3px 0;"></div>
<div style="position:absolute;left:1083.2px;top:389.8px;width:191.2px;height:133.2px;background:#3d3d3d;border-radius:3px;"></div>
<svg style="position:absolute;left:1087.8px;top:396.4px;" width="7" height="4.5" viewBox="0 0 7 4.5"><path d="M0.800 0.800L3.500 3.500L6.200 0.800" stroke="#bdbdbd" stroke-width="0.900" fill="none"/></svg>
<svg style="position:absolute;left:1264.3px;top:396.3px;" width="8" height="4" viewBox="0 0 8 4"><g fill="#2a2a2a"><circle cx="0.700" cy="0.700" r="0.500"/><circle cx="2.900" cy="0.700" r="0.500"/><circle cx="5.100" cy="0.700" r="0.500"/><circle cx="7.300" cy="0.700" r="0.500"/><circle cx="0.700" cy="2.900" r="0.500"/><circle cx="2.900" cy="2.900" r="0.500"/><circle cx="5.100" cy="2.900" r="0.500"/><circle cx="7.300" cy="2.900" r="0.500"/></g></svg>
<svg style="position:absolute;left:1088.6px;top:412.6px;" width="154.6" height="100.6" viewBox="0 0 154.6 100.6"><defs><clipPath id="pvc"><rect width="154.600" height="100.600" rx="2"/></clipPath><radialGradient id="sph" cx="29.8%" cy="45.4%" r="78%" fx="29.8%" fy="45.4%"><stop offset="0" stop-color="#b8caf8"/><stop offset="0.070" stop-color="#8fadf5"/><stop offset="0.160" stop-color="#4f80ee"/><stop offset="0.280" stop-color="#2a62e6"/><stop offset="0.500" stop-color="#194ed2"/><stop offset="0.750" stop-color="#0e38ae"/><stop offset="1" stop-color="#08257e"/></radialGradient><linearGradient id="flr" x1="0" y1="0" x2="0" y2="1"><stop offset="0" stop-color="#000" stop-opacity="0.100"/><stop offset="1" stop-color="#fff" stop-opacity="0.060"/></linearGradient><filter id="bl3" x="-30%" y="-30%" width="160%" height="160%"><feGaussianBlur stdDeviation="3.200"/></filter><filter id="bl1" x="-30%" y="-30%" width="160%" height="160%"><feGaussianBlur stdDeviation="1.300"/></filter></defs><g clip-path="url(#pvc)"><rect width="154.600" height="100.600" fill="#8c8c8c"/><polygon points="1.6,0 20.5,0 18.4,6.4 -1.1,6.4" fill="#4c4c4c"/><polygon points="39.4,0 58.3,0 57.6,6.4 38.0,6.4" fill="#4c4c4c"/><polygon points="77.2,0 96.1,0 96.8,6.4 77.2,6.4" fill="#4c4c4c"/><polygon points="115.0,0 133.9,0 136.0,6.4 116.4,6.4" fill="#4c4c4c"/><polygon points="152.8,0 171.7,0 175.1,6.4 155.5,6.4" fill="#4c4c4c"/><polygon points="18.4,6.4 38.0,6.4 36.1,15.3 15.6,15.3" fill="#4c4c4c"/><polygon points="57.6,6.4 77.2,6.4 77.2,15.3 56.7,15.3" fill="#4c4c4c"/><polygon points="96.8,6.4 116.4,6.4 118.3,15.3 97.7,15.3" fill="#4c4c4c"/><polygon points="136.0,6.4 155.5,6.4 159.3,15.3 138.8,15.3" fill="#4c4c4c"/><polygon points="-4.9,15.3 15.6,15.3 12.4,25.2 -9.2,25.2" fill="#4c4c4c"/><polygon points="36.1,15.3 56.7,15.3 55.6,25.2 34.0,25.2" fill="#4c4c4c"/><polygon points="77.2,15.3 97.7,15.3 98.8,25.2 77.2,25.2" fill="#4c4c4c"/><polygon points="118.3,15.3 138.8,15.3 142.0,25.2 120.4,25.2" fill="#4c4c4c"/><polygon points="12.4,25.2 34.0,25.2 31.7,35.9 9.0,35.9" fill="#4c4c4c"/><polygon points="55.6,25.2 77.2,25.2 77.2,35.9 54.5,35.9" fill="#4c4c4c"/><polygon points="98.8,25.2 120.4,25.2 122.7,35.9 99.9,35.9" fill="#4c4c4c"/><polygon points="142.0,25.2 163.6,25.2 168.1,35.9 145.4,35.9" fill="#4c4c4c"/><polygon points="-13.7,35.9 9.0,35.9 5.1,48.2 -19.0,48.2" fill="#4c4c4c"/><polygon points="31.7,35.9 54.5,35.9 53.2,48.2 29.1,48.2" fill="#4c4c4c"/><polygon points="77.2,35.9 99.9,35.9 101.2,48.2 77.2,48.2" fill="#4c4c4c"/><polygon points="122.7,35.9 145.4,35.9 149.3,48.2 125.3,48.2" fill="#4c4c4c"/><polygon points="5.1,48.2 29.1,48.2 26.3,61.2 0.9,61.2" fill="#4c4c4c"/><polygon points="53.2,48.2 77.2,48.2 77.2,61.2 51.8,61.2" fill="#4c4c4c"/><polygon points="101.2,48.2 125.3,48.2 128.1,61.2 102.6,61.2" fill="#4c4c4c"/><polygon points="149.3,48.2 173.4,48.2 178.9,61.2 153.5,61.2" fill="#4c4c4c"/><polygon points="-24.5,61.2 0.9,61.2 -4.2,77.2 -31.4,77.2" fill="#4c4c4c"/><polygon points="26.3,61.2 51.8,61.2 50.1,77.2 22.9,77.2" fill="#4c4c4c"/><polygon points="77.2,61.2 102.6,61.2 104.3,77.2 77.2,77.2" fill="#4c4c4c"/><polygon points="128.1,61.2 153.5,61.2 158.6,77.2 131.5,77.2" fill="#4c4c4c"/><polygon points="-4.2,77.2 22.9,77.2 19.2,94.8 -9.9,94.8" fill="#4c4c4c"/><polygon points="50.1,77.2 77.2,77.2 77.2,94.8 48.2,94.8" fill="#4c4c4c"/><polygon points="104.3,77.2 131.5,77.2 135.2,94.8 106.2,94.8" fill="#4c4c4c"/><polygon points="19.2,94.8 48.2,94.8 45.9,116 14.6,116" fill="#4c4c4c"/><polygon points="77.2,94.8 106.2,94.8 108.5,116 77.2,116" fill="#4c4c4c"/><polygon points="135.2,94.8 164.3,94.8 171.1,116 139.8,116" fill="#4c4c4c"/><rect width="154.600" height="100.600" fill="url(#flr)"/><g filter="url(#bl3)"><ellipse cx="134" cy="60" rx="26" ry="33" fill="#000" fill-opacity="0.500" transform="rotate(18 134 60)"/><ellipse cx="113" cy="84" rx="27" ry="9" fill="#000" fill-opacity="0.750" transform="rotate(-8 113 84)"/></g><circle cx="77.200" cy="51.200" r="41.500" fill="url(#sph)"/><path d="M40.500 36A40 40 0 0 1 74 11.500" stroke="#9ab8ff" stroke-opacity="0.550" stroke-width="2.600" fill="none" filter="url(#bl1)"/></g></svg>
<svg style="position:absolute;left:1161.8px;top:515.4px;" width="8" height="3" viewBox="0 0 8 3"><path d="M0 0.500H8M0 2.500H8" stroke="#5c5c5c" stroke-width="0.600"/></svg>
<div style="position:absolute;left:1250px;top:413.0px;width:19px;height:12.56px;background:#545454;border-radius:3px 3px 0 0;"></div>
<div style="position:absolute;left:1250px;top:426.06px;width:19px;height:12.56px;background:#4772b3;border-radius:0;"></div>
<div style="position:absolute;left:1250px;top:439.12px;width:19px;height:12.56px;background:#545454;border-radius:0;"></div>
<div style="position:absolute;left:1250px;top:452.18px;width:19px;height:12.56px;background:#545454;border-radius:0;"></div>
<div style="position:absolute;left:1250px;top:465.24px;width:19px;height:12.56px;background:#545454;border-radius:0;"></div>
<div style="position:absolute;left:1250px;top:478.3px;width:19px;height:12.56px;background:#545454;border-radius:0;"></div>
<div style="position:absolute;left:1250px;top:491.36px;width:19px;height:12.56px;background:#545454;border-radius:0 0 3px 3px;"></div>
<svg style="position:absolute;left:1253.5px;top:413.3px;" width="12" height="12" viewBox="0 0 12 12"><rect x="2.200" y="2.200" width="7.600" height="7.600" fill="none" stroke="#d8d8d8" stroke-width="0.800"/></svg>
<svg style="position:absolute;left:1253.5px;top:426.36px;" width="12" height="12" viewBox="0 0 12 12"><circle cx="6" cy="6" r="3.900" fill="none" stroke="#fff" stroke-width="0.900"/><path d="M2.200 5.400C3.800 7.200 8.200 7.200 9.800 5.400" stroke="#fff" stroke-width="0.800" fill="none"/></svg>
<svg style="position:absolute;left:1253.5px;top:439.42px;" width="12" height="12" viewBox="0 0 12 12"><path d="M2 4H8V10H2ZM2 4L4 2H10V8L8 10M8 4L10 2" stroke="#cfcfcf" stroke-width="0.700" fill="none"/></svg>
<svg style="position:absolute;left:1253.5px;top:452.48px;" width="12" height="12" viewBox="0 0 12 12"><path d="M2.600 9.800C2.600 6 4 3.600 6 2.200M5.200 9.800C5.200 7 6.200 5 8 3.600M7.800 9.800C7.800 8 8.600 6.600 9.800 5.600" stroke="#bdbdbd" stroke-width="0.800" fill="none"/></svg>
<svg style="position:absolute;left:1253.5px;top:465.54px;" width="12" height="12" viewBox="0 0 12 12"><circle cx="6" cy="5.200" r="3.300" fill="none" stroke="#d8d8d8" stroke-width="0.800"/><path d="M2.400 9.800H9.600M3.600 7.600L2.400 9.800M8.400 7.600L9.600 9.800" stroke="#d8d8d8" stroke-width="0.800" fill="none"/></svg>
<svg style="position:absolute;left:1253.5px;top:478.6px;" width="12" height="12" viewBox="0 0 12 12"><path d="M4 2L2 3.600L3.200 5L4 4.400V9.800H8V4.400L8.800 5L10 3.600L8 2C7.400 3 4.600 3 4 2Z" stroke="#d8d8d8" stroke-width="0.800" fill="none"/></svg>
<svg style="position:absolute;left:1253.5px;top:491.66px;" width="12" height="12" viewBox="0 0 12 12"><path d="M6 1.800C7.600 4.400 8.800 5.800 8.800 7.400A2.800 2.800 0 0 1 3.200 7.400C3.200 5.800 4.400 4.400 6 1.800Z" stroke="#d8d8d8" stroke-width="0.800" fill="none"/></svg>
<div style="position:absolute;left:1083.2px;top:526.8px;width:191px;height:178.2px;background:#3d3d3d;border-radius:3px 3px 0 0;"></div>
<svg style="position:absolute;left:1087.8px;top:531.8px;" width="7" height="4.5" viewBox="0 0 7 4.5"><path d="M0.800 0.800L3.500 3.500L6.200 0.800" stroke="#bdbdbd" stroke-width="0.900" fill="none"/></svg>
<svg style="position:absolute;left:1264.3px;top:531.9px;" width="8" height="4" viewBox="0 0 8 4"><g fill="#2a2a2a"><circle cx="0.700" cy="0.700" r="0.500"/><circle cx="2.900" cy="0.700" r="0.500"/><circle cx="5.100" cy="0.700" r="0.500"/><circle cx="7.300" cy="0.700" r="0.500"/><circle cx="0.700" cy="2.900" r="0.500"/><circle cx="2.900" cy="2.900" r="0.500"/><circle cx="5.100" cy="2.900" r="0.500"/><circle cx="7.300" cy="2.900" r="0.500"/></g></svg>
<div style="position:absolute;left:1088.8px;top:547.8px;width:179.8px;height:11.9px;background:#4772b3;border-radius:3px;"></div>
<svg style="position:absolute;left:1091px;top:549.2px;" width="10" height="9.5" viewBox="0 0 10 9.5"><path d="M2.400 0.800H8.200V4.800H2.400Z" fill="#fff"/><path d="M0.800 3.400H2.400V7.600H0.800ZM2.400 6H7.600V8.400H2.400Z" fill="#fff"/><path d="M9 2.200C10 3.600 10 5.600 9 7" stroke="#fff" stroke-width="0.800" fill="none"/></svg>
<div style="position:absolute;left:1158.8px;top:572.3px;width:95.9px;height:11.6px;background:#282828;border-radius:3px;"></div>
<div style="position:absolute;left:1163.200px;top:576.500px;width:3.600px;height:3.600px;border-radius:50%;background:#56d05e"></div>
<div style="position:absolute;left:1158.8px;top:596.4px;width:95.9px;height:11.9px;background:#282828;border-radius:3px;"></div>
<svg style="position:absolute;left:1248px;top:600.7px;" width="6" height="4" viewBox="0 0 6 4"><path d="M0.700 0.800L3 3.100L5.300 0.800" stroke="#bdbdbd" stroke-width="0.9" fill="none"/></svg>
<div style="position:absolute;left:1158.8px;top:613px;width:95.9px;height:11.9px;background:#282828;border-radius:3px;"></div>
<svg style="position:absolute;left:1248px;top:617.3px;" width="6" height="4" viewBox="0 0 6 4"><path d="M0.700 0.800L3 3.100L5.300 0.800" stroke="#bdbdbd" stroke-width="0.9" fill="none"/></svg>
<div style="position:absolute;left:1158.8px;top:629.4px;width:11.2px;height:12px;background:#282828;border-radius:3px;"></div>
<div style="position:absolute;left:1162.700px;top:633.50px;width:3.800px;height:3.800px;border-radius:50%;background:#d6d028"></div>
<div style="position:absolute;left:1171.3px;top:629.3px;width:83.4px;height:12.2px;background:#0b40ea;border-radius:3px;"></div>
<div style="position:absolute;left:1158.8px;top:646px;width:11.2px;height:12px;background:#282828;border-radius:3px;"></div>
<div style="position:absolute;left:1162.700px;top:650.10px;width:3.800px;height:3.800px;border-radius:50%;background:#b4b4b4"></div>
<div style="position:absolute;left:1171.3px;top:645.9px;width:83.4px;height:12.2px;background:#545454;border-radius:3px;"></div>
<div style="position:absolute;left:1158.8px;top:662.7px;width:11.2px;height:12px;background:#282828;border-radius:3px;"></div>
<div style="position:absolute;left:1162.700px;top:666.80px;width:3.800px;height:3.800px;border-radius:50%;background:#6a62e8"></div>
<div style="position:absolute;left:1176px;top:662.6px;width:78.7px;height:12.6px;background:#545454;border-radius:3px 3px 0 0;"></div>
<div style="position:absolute;left:1176px;top:675.7px;width:78.7px;height:12.6px;background:#545454;"></div>
<div style="position:absolute;left:1176px;top:688.8px;width:78.7px;height:12.2px;background:#545454;border-radius:0 0 3px 3px;"></div>
<div style="position:absolute;left:1261.200px;top:601.10px;width:2.600px;height:2.600px;border-radius:50%;background:#d8d8d8"></div>
<div style="position:absolute;left:1261.200px;top:617.60px;width:2.600px;height:2.600px;border-radius:50%;background:#d8d8d8"></div>
<div style="position:absolute;left:1261.200px;top:634.10px;width:2.600px;height:2.600px;border-radius:50%;background:#d8d8d8"></div>
<div style="position:absolute;left:1261.200px;top:650.70px;width:2.600px;height:2.600px;border-radius:50%;background:#d8d8d8"></div>
<div style="position:absolute;left:1261.200px;top:667.50px;width:2.600px;height:2.600px;border-radius:50%;background:#d8d8d8"></div>
<div style="position:absolute;left:1261.200px;top:680.70px;width:2.600px;height:2.600px;border-radius:50%;background:#d8d8d8"></div>
<div style="position:absolute;left:1261.200px;top:693.90px;width:2.600px;height:2.600px;border-radius:50%;background:#d8d8d8"></div>
<div style="position:absolute;left:1.3px;top:656px;width:1055.7px;height:49.5px;background:#2b2b2b;border-radius:3px;"></div>
<div style="position:absolute;left:1.3px;top:656px;width:1055.7px;height:17.4px;background:#2c2c2c;border-radius:3px 3px 0 0;"></div>
<div style="position:absolute;left:1.3px;top:673.4px;width:1055.7px;height:14.2px;background:#1b1b1b;"></div>
<svg style="position:absolute;left:0px;top:687.6px;" width="1057" height="11.5" viewBox="0 0 1057 11.5"><path d="M34.6 0V11.500" stroke="#1e1e1e" stroke-width="0.800"/><path d="M54.3 0V11.500" stroke="#282828" stroke-width="0.800"/><path d="M73.9 0V11.500" stroke="#1e1e1e" stroke-width="0.800"/><path d="M93.5 0V11.500" stroke="#282828" stroke-width="0.800"/><path d="M113.2 0V11.500" stroke="#1e1e1e" stroke-width="0.800"/><path d="M132.8 0V11.500" stroke="#282828" stroke-width="0.800"/><path d="M152.4 0V11.500" stroke="#1e1e1e" stroke-width="0.800"/><path d="M172.1 0V11.500" stroke="#282828" stroke-width="0.800"/><path d="M191.7 0V11.500" stroke="#1e1e1e" stroke-width="0.800"/><path d="M211.4 0V11.500" stroke="#282828" stroke-width="0.800"/><path d="M231.0 0V11.500" stroke="#1e1e1e" stroke-width="0.800"/><path d="M250.6 0V11.500" stroke="#282828" stroke-width="0.800"/><path d="M270.3 0V11.500" stroke="#1e1e1e" stroke-width="0.800"/><path d="M289.9 0V11.500" stroke="#282828" stroke-width="0.800"/><path d="M309.5 0V11.500" stroke="#1e1e1e" stroke-width="0.800"/><path d="M329.2 0V11.500" stroke="#282828" stroke-width="0.800"/><path d="M348.8 0V11.500" stroke="#1e1e1e" stroke-width="0.800"/><path d="M368.5 0V11.500" stroke="#282828" stroke-width="0.800"/><path d="M388.1 0V11.500" stroke="#1e1e1e" stroke-width="0.800"/><path d="M407.7 0V11.500" stroke="#282828" stroke-width="0.800"/><path d="M427.4 0V11.500" stroke="#1e1e1e" stroke-width="0.800"/><path d="M447.0 0V11.500" stroke="#282828" stroke-width="0.800"/><path d="M466.6 0V11.500" stroke="#1e1e1e" stroke-width="0.800"/><path d="M486.3 0V11.500" stroke="#282828" stroke-width="0.800"/><path d="M505.9 0V11.500" stroke="#1e1e1e" stroke-width="0.800"/><path d="M525.6 0V11.500" stroke="#282828" stroke-width="0.800"/><path d="M545.2 0V11.500" stroke="#1e1e1e" stroke-width="0.800"/><path d="M564.8 0V11.500" stroke="#282828" stroke-width="0.800"/><path d="M584.5 0V11.500" stroke="#1e1e1e" stroke-width="0.800"/><path d="M604.1 0V11.500" stroke="#282828" stroke-width="0.800"/><path d="M623.7 0V11.500" stroke="#1e1e1e" stroke-width="0.800"/><path d="M643.4 0V11.500" stroke="#282828" stroke-width="0.800"/><path d="M663.0 0V11.500" stroke="#1e1e1e" stroke-width="0.800"/><path d="M682.7 0V11.500" stroke="#282828" stroke-width="0.800"/><path d="M702.3 0V11.500" stroke="#1e1e1e" stroke-width="0.800"/><path d="M721.9 0V11.500" stroke="#282828" stroke-width="0.800"/><path d="M741.6 0V11.500" stroke="#1e1e1e" stroke-width="0.800"/><path d="M761.2 0V11.500" stroke="#282828" stroke-width="0.800"/><path d="M780.8 0V11.500" stroke="#1e1e1e" stroke-width="0.800"/><path d="M800.5 0V11.500" stroke="#282828" stroke-width="0.800"/><path d="M820.1 0V11.500" stroke="#1e1e1e" stroke-width="0.800"/><path d="M839.8 0V11.500" stroke="#282828" stroke-width="0.800"/><path d="M859.4 0V11.500" stroke="#1e1e1e" stroke-width="0.800"/><path d="M879.0 0V11.500" stroke="#282828" stroke-width="0.800"/><path d="M898.7 0V11.500" stroke="#1e1e1e" stroke-width="0.800"/><path d="M918.3 0V11.500" stroke="#282828" stroke-width="0.800"/><path d="M937.9 0V11.500" stroke="#1e1e1e" stroke-width="0.800"/><path d="M957.6 0V11.500" stroke="#282828" stroke-width="0.800"/><path d="M977.2 0V11.500" stroke="#1e1e1e" stroke-width="0.800"/><path d="M996.9 0V11.500" stroke="#282828" stroke-width="0.800"/><path d="M1016.5 0V11.500" stroke="#1e1e1e" stroke-width="0.800"/><path d="M1036.1 0V11.500" stroke="#282828" stroke-width="0.800"/></svg>
<div style="position:absolute;left:1.3px;top:687.6px;width:37.25px;height:11.6px;background:rgba(0,0,0,0.22);"></div>
<div style="position:absolute;left:1016.4975000000001px;top:687.6px;width:40.50249999999994px;height:11.6px;background:rgba(0,0,0,0.22);"></div>
<div style="position:absolute;left:5.6px;top:699.4px;width:1045.6px;height:5.2px;background:#474747;border-radius:2.600px;"></div>
<div style="position:absolute;left:6.800px;top:700.700px;width:2.600px;height:2.600px;border-radius:50%;background:#2a2a2a"></div>
<div style="position:absolute;left:1047.200px;top:700.700px;width:2.600px;height:2.600px;border-radius:50%;background:#2a2a2a"></div>
<svg style="position:absolute;left:8.4px;top:659.8px;" width="10.5" height="10.5" viewBox="0 0 10.5 10.5"><circle cx="5.200" cy="5.200" r="4.700" fill="#e2e2e2"/><path d="M5.200 5.200L7.800 1.400A4.700 4.700 0 0 1 9.800 6.200Z" fill="#2c2c2c"/><path d="M5.200 2V5.200L3 7" stroke="#2c2c2c" stroke-width="0.800" fill="none"/></svg>
<svg style="position:absolute;left:19.6px;top:663.1999999999999px;" width="6" height="4" viewBox="0 0 6 4"><path d="M0.700 0.800L3 3.100L5.300 0.800" stroke="#bdbdbd" stroke-width="0.9" fill="none"/></svg>
<div style="position:absolute;left:31.2px;top:658.6px;width:44.8px;height:12px;background:#252525;border-radius:3px 0 0 3px;"></div>
<div style="position:absolute;left:76.4px;top:658.6px;width:39.2px;height:12px;background:#252525;border-radius:0 3px 3px 0;"></div>
<svg style="position:absolute;left:68.8px;top:663.1999999999999px;" width="6" height="4" viewBox="0 0 6 4"><path d="M0.700 0.800L3 3.100L5.300 0.800" stroke="#bdbdbd" stroke-width="0.9" fill="none"/></svg>
<svg style="position:absolute;left:108.2px;top:663.1999999999999px;" width="6" height="4" viewBox="0 0 6 4"><path d="M0.700 0.800L3 3.100L5.300 0.800" stroke="#bdbdbd" stroke-width="0.9" fill="none"/></svg>
<div style="position:absolute;left:466.8px;top:658.6px;width:13px;height:12px;background:#4d4d4d;border-radius:3px;"></div>
<div style="position:absolute;left:470.700px;top:662px;width:5.200px;height:5.200px;border-radius:50%;background:#f0f0f0"></div>
<svg style="position:absolute;left:482.8px;top:663.1999999999999px;" width="6" height="4" viewBox="0 0 6 4"><path d="M0.700 0.800L3 3.100L5.300 0.800" stroke="#4a4a4a" stroke-width="0.9" fill="none"/></svg>
<div style="position:absolute;left:497.0px;top:658.6px;width:12.77px;height:12px;background:#4d4d4d;border-radius:3px 0 0 3px;"></div>
<div style="position:absolute;left:510.17px;top:658.6px;width:12.77px;height:12px;background:#4d4d4d;border-radius:0;"></div>
<div style="position:absolute;left:523.34px;top:658.6px;width:12.77px;height:12px;background:#4d4d4d;border-radius:0;"></div>
<div style="position:absolute;left:536.51px;top:658.6px;width:12.77px;height:12px;background:#4d4d4d;border-radius:0;"></div>
<div style="position:absolute;left:549.68px;top:658.6px;width:12.77px;height:12px;background:#4d4d4d;border-radius:0;"></div>
<div style="position:absolute;left:562.85px;top:658.6px;width:12.77px;height:12px;background:#4d4d4d;border-radius:0 3px 3px 0;"></div>
<svg style="position:absolute;left:496.9px;top:658.6px;" width="13" height="12" viewBox="0 0 13 12"><path d="M3.400 2.600V9.400" stroke="#eee" stroke-width="1.100"/><path d="M9.600 2.600V9.400L4.400 6Z" fill="#eee"/></svg>
<svg style="position:absolute;left:510.07px;top:658.6px;" width="13" height="12" viewBox="0 0 13 12"><path d="M1.400 6L4 2.800L6.600 6L4 9.200Z" fill="#eee"/><path d="M11.400 3V9L7.200 6Z" fill="#eee"/></svg>
<svg style="position:absolute;left:523.24px;top:658.6px;" width="13" height="12" viewBox="0 0 13 12"><path d="M9.800 2.200V9.800L3 6Z" fill="#eee"/></svg>
<svg style="position:absolute;left:536.41px;top:658.6px;" width="13" height="12" viewBox="0 0 13 12"><path d="M3.400 2.200V9.800L10.200 6Z" fill="#fff"/></svg>
<svg style="position:absolute;left:549.5799999999999px;top:658.6px;" width="13" height="12" viewBox="0 0 13 12"><path d="M11.600 6L9 2.800L6.400 6L9 9.200Z" fill="#eee"/><path d="M1.600 3V9L5.800 6Z" fill="#eee"/></svg>
<svg style="position:absolute;left:562.75px;top:658.6px;" width="13" height="12" viewBox="0 0 13 12"><path d="M9.600 2.600V9.400" stroke="#eee" stroke-width="1.100"/><path d="M3.400 2.600V9.400L8.600 6Z" fill="#eee"/></svg>
<div style="position:absolute;left:871.6px;top:658.6px;width:49.4px;height:12px;background:#545454;border-radius:3px;"></div>
<svg style="position:absolute;left:926px;top:659.6px;" width="10" height="10.5" viewBox="0 0 10 10.5"><circle cx="5" cy="5.800" r="3.800" fill="none" stroke="#d8d8d8" stroke-width="0.900"/><path d="M5 3.600V5.800L6.600 7M3.800 0.800H6.200M8.200 2L9 2.800" stroke="#d8d8d8" stroke-width="0.800" fill="none"/></svg>
<div style="position:absolute;left:939px;top:658.6px;width:57.2px;height:12px;background:#545454;border-radius:3px 0 0 3px;"></div>
<div style="position:absolute;left:996.6px;top:658.6px;width:56px;height:12px;background:#545454;border-radius:0 3px 3px 0;"></div>
<div style="position:absolute;left:31.2px;top:675px;width:15.7px;height:11.2px;background:#4772b3;border-radius:2.500px;"></div>
<div style="position:absolute;left:38.4px;top:686px;width:1.1px;height:19.5px;background:#4772b3;"></div>
<svg style="position:absolute;left:1.6px;top:683.5px;" width="4" height="7" viewBox="0 0 4 7"><path d="M0.800 0.800L3.200 3.500L0.800 6.200" stroke="#8a8a8a" stroke-width="0.800" fill="none"/></svg>
<svg style="position:absolute;left:1052px;top:683.5px;" width="4" height="7" viewBox="0 0 4 7"><path d="M3.200 0.800L0.800 3.500L3.200 6.200" stroke="#9a9a9a" stroke-width="0.800" fill="none"/></svg>
<div style="position:absolute;left:0px;top:705.6px;width:1280px;height:14.4px;background:#181818;"></div>
<svg style="position:absolute;left:8px;top:708.3px;" width="11" height="10.5" viewBox="0 0 11 10.5"><rect x="1" y="0.800" width="6" height="9" rx="3" fill="none" stroke="#9a9a9a" stroke-width="0.800"/><path d="M1 4.400V3.800A3 3 0 0 1 4 0.800V4.400Z" fill="#9a9a9a"/></svg>
<svg style="position:absolute;left:76px;top:708.3px;" width="11" height="10.5" viewBox="0 0 11 10.5"><rect x="1" y="0.800" width="6" height="9" rx="3" fill="none" stroke="#9a9a9a" stroke-width="0.800"/><path d="M1 4.400V3.800A3 3 0 0 1 4 0.800V4.400Z" fill="#9a9a9a"/><path d="M8.600 1.200V4.600M10 1.800V4" stroke="#9a9a9a" stroke-width="0.700"/></svg>
<svg style="position:absolute;left:149.6px;top:708.3px;" width="11" height="10.5" viewBox="0 0 11 10.5"><rect x="1" y="0.800" width="6" height="9" rx="3" fill="none" stroke="#9a9a9a" stroke-width="0.800"/><rect x="3.200" y="1.600" width="1.600" height="3" rx="0.800" fill="#9a9a9a"/></svg>
<svg style="position:absolute;left:291px;top:708.3px;" width="11" height="10.5" viewBox="0 0 11 10.5"><rect x="1" y="0.800" width="6" height="9" rx="3" fill="none" stroke="#9a9a9a" stroke-width="0.800"/><path d="M1 4.400V3.800A3 3 0 0 1 4 0.800V4.400Z" fill="#9a9a9a"/></svg>
<svg style="position:absolute;left:332.6px;top:708.3px;" width="11" height="10.5" viewBox="0 0 11 10.5"><rect x="1" y="0.800" width="6" height="9" rx="3" fill="none" stroke="#9a9a9a" stroke-width="0.800"/><path d="M1 4.400V3.800A3 3 0 0 1 4 0.800V4.400Z" fill="#9a9a9a"/><path d="M8.600 1.200V4.600M10 1.800V4" stroke="#9a9a9a" stroke-width="0.700"/></svg>
<div style="position:absolute;left:32px;top:718.8px;width:229.5px;height:1.2px;background:#f2f2f2;"></div>
<div id="txt" style="position:absolute;left:0;top:0;width:1280px;height:720px;filter:blur(0.3px);pointer-events:none">
<div style="position:absolute;left:15.6px;top:2.7px;line-height:12px;font-family:'Liberation Sans',sans-serif;font-size:8px;color:#000;letter-spacing:-0.1px">Blender</div>
<div style="position:absolute;top:18.70px;line-height:12px;font-size:7.33px;color:#c6c6c6;white-space:nowrap;left:23.4px;">File</div>
<div style="position:absolute;top:18.70px;line-height:12px;font-size:7.33px;color:#c6c6c6;white-space:nowrap;left:45.6px;">Edit</div>
<div style="position:absolute;top:18.70px;line-height:12px;font-size:7.33px;color:#c6c6c6;white-space:nowrap;left:68.2px;">Render</div>
<div style="position:absolute;top:18.70px;line-height:12px;font-size:7.33px;color:#c6c6c6;white-space:nowrap;left:101.6px;">Window</div>
<div style="position:absolute;top:18.70px;line-height:12px;font-size:7.33px;color:#c6c6c6;white-space:nowrap;left:137.6px;">Help</div>
<div style="position:absolute;top:20.00px;line-height:12px;font-size:7.33px;color:#ececec;white-space:nowrap;left:176.4px;">Layout</div>
<div style="position:absolute;top:20.00px;line-height:12px;font-size:7.33px;color:#8a8a8a;white-space:nowrap;left:211.6px;">Modeling</div>
<div style="position:absolute;top:20.00px;line-height:12px;font-size:7.33px;color:#8a8a8a;white-space:nowrap;left:254.5px;">Sculpting</div>
<div style="position:absolute;top:20.00px;line-height:12px;font-size:7.33px;color:#8a8a8a;white-space:nowrap;left:298.6px;">UV Editing</div>
<div style="position:absolute;top:20.00px;line-height:12px;font-size:7.33px;color:#8a8a8a;white-space:nowrap;left:346.5px;">Texture Paint</div>
<div style="position:absolute;top:20.00px;line-height:12px;font-size:7.33px;color:#8a8a8a;white-space:nowrap;left:404px;">Shading</div>
<div style="position:absolute;top:20.00px;line-height:12px;font-size:7.33px;color:#8a8a8a;white-space:nowrap;left:443.2px;">Animation</div>
<div style="position:absolute;top:20.00px;line-height:12px;font-size:7.33px;color:#8a8a8a;white-space:nowrap;left:490.5px;">Rendering</div>
<div style="position:absolute;top:20.00px;line-height:12px;font-size:7.33px;color:#8a8a8a;white-space:nowrap;left:537.2px;">Compositing</div>
<div style="position:absolute;top:20.00px;line-height:12px;font-size:7.33px;color:#8a8a8a;white-space:nowrap;left:591.8px;">Geometry Nodes</div>
<div style="position:absolute;top:20.00px;line-height:12px;font-size:7.33px;color:#8a8a8a;white-space:nowrap;left:661px;">Scripting</div>
<div style="position:absolute;top:18.60px;line-height:12px;font-size:7.33px;color:#d0d0d0;white-space:nowrap;left:1040.9px;">Scene</div>
<div style="position:absolute;top:18.60px;line-height:12px;font-size:7.33px;color:#d0d0d0;white-space:nowrap;left:1172.9px;">ViewLayer</div>
<div style="position:absolute;top:35.60px;line-height:12px;font-size:7.33px;color:#d6d6d6;white-space:nowrap;left:48.4px;">Edit Mode</div>
<div style="position:absolute;top:35.60px;line-height:12px;font-size:7.33px;color:#cdcdcd;white-space:nowrap;left:154.3px;">View</div>
<div style="position:absolute;top:35.60px;line-height:12px;font-size:7.33px;color:#cdcdcd;white-space:nowrap;left:180.6px;">Select</div>
<div style="position:absolute;top:35.60px;line-height:12px;font-size:7.33px;color:#cdcdcd;white-space:nowrap;left:211.5px;">Add</div>
<div style="position:absolute;top:35.60px;line-height:12px;font-size:7.33px;color:#cdcdcd;white-space:nowrap;left:234.4px;">Mesh</div>
<div style="position:absolute;top:35.60px;line-height:12px;font-size:7.33px;color:#cdcdcd;white-space:nowrap;left:261.5px;">Vertex</div>
<div style="position:absolute;top:35.60px;line-height:12px;font-size:7.33px;color:#cdcdcd;white-space:nowrap;left:293.5px;">Edge</div>
<div style="position:absolute;top:35.60px;line-height:12px;font-size:7.33px;color:#cdcdcd;white-space:nowrap;left:319.7px;">Face</div>
<div style="position:absolute;top:35.60px;line-height:12px;font-size:7.33px;color:#cdcdcd;white-space:nowrap;left:345.5px;">UV</div>
<div style="position:absolute;top:35.60px;line-height:12px;font-size:7.33px;color:#d6d6d6;white-space:nowrap;left:462.2px;">Global</div>
<div style="position:absolute;top:54.10px;line-height:12px;font-size:7.33px;color:#9c9c9c;white-space:nowrap;left:30.2px;">Orientation:</div>
<div style="position:absolute;top:54.10px;line-height:12px;font-size:7.33px;color:#d6d6d6;white-space:nowrap;left:109.8px;">Default</div>
<div style="position:absolute;top:54.10px;line-height:12px;font-size:7.33px;color:#9c9c9c;white-space:nowrap;left:166.3px;">Drag:</div>
<div style="position:absolute;top:54.10px;line-height:12px;font-size:7.33px;color:#d6d6d6;white-space:nowrap;left:196.8px;">Select Box</div>
<div style="position:absolute;top:54.10px;line-height:12px;font-size:7.33px;color:#e2e2e2;white-space:nowrap;left:960.7px;">X</div>
<div style="position:absolute;top:54.10px;line-height:12px;font-size:7.33px;color:#e2e2e2;white-space:nowrap;left:971.3px;">Y</div>
<div style="position:absolute;top:54.10px;line-height:12px;font-size:7.33px;color:#e2e2e2;white-space:nowrap;left:981.9px;">Z</div>
<div style="position:absolute;top:54.10px;line-height:12px;font-size:7.33px;color:#d6d6d6;white-space:nowrap;left:1016.2px;">Options</div>
<div style="position:absolute;top:72.70px;line-height:12px;font-size:7.33px;color:#e6e6e6;white-space:nowrap;left:44.4px;">User Perspective</div>
<div style="position:absolute;top:85.00px;line-height:12px;font-size:7.33px;color:#e6e6e6;white-space:nowrap;left:44.4px;">(1) Cube</div>
<div style="position:absolute;top:52.40px;line-height:12px;font-size:7.33px;color:#c9c9c9;white-space:nowrap;left:1088px;">Scene Collection</div>
<div style="position:absolute;top:65.73px;line-height:12px;font-size:7.33px;color:#c9c9c9;white-space:nowrap;left:1101.7px;">Collection</div>
<div style="position:absolute;top:79.07px;line-height:12px;font-size:7.33px;color:#c9c9c9;white-space:nowrap;left:1114.8px;">Camera</div>
<div style="position:absolute;top:92.40px;line-height:12px;font-size:7.33px;color:#f2b238;white-space:nowrap;left:1114.6px;">Cube</div>
<div style="position:absolute;top:105.73px;line-height:12px;font-size:7.33px;color:#e57a22;white-space:nowrap;left:1114.6px;">Cube.001</div>
<div style="position:absolute;top:119.07px;line-height:12px;font-size:7.33px;color:#e57a22;white-space:nowrap;left:1114.6px;">Cube.002</div>
<div style="position:absolute;top:132.40px;line-height:12px;font-size:7.33px;color:#e57a22;white-space:nowrap;left:1114.6px;">Cube.003</div>
<div style="position:absolute;top:145.73px;line-height:12px;font-size:7.33px;color:#c9c9c9;white-space:nowrap;left:1114.8px;">Light</div>
<div style="position:absolute;top:273.80px;line-height:12px;font-size:7.33px;color:#c9c9c9;white-space:nowrap;left:1100px;">Cube</div>
<div style="position:absolute;top:273.80px;line-height:12px;font-size:7.33px;color:#c9c9c9;white-space:nowrap;left:1153.8px;">blue</div>
<div style="position:absolute;top:300.90px;line-height:12px;font-size:7.33px;color:#e4e4e4;white-space:nowrap;left:1103.8px;">blue</div>
<div style="position:absolute;top:354.40px;line-height:12px;font-size:7.33px;color:#e0e0e0;white-space:nowrap;left:1108.7px;">blue</div>
<div style="position:absolute;top:371.20px;line-height:12px;font-size:7.33px;color:#e4e4e4;white-space:nowrap;left:1014.5999999999999px;width:200px;text-align:center;">Assign</div>
<div style="position:absolute;top:371.20px;line-height:12px;font-size:7.33px;color:#e4e4e4;white-space:nowrap;left:1078.4px;width:200px;text-align:center;">Select</div>
<div style="position:absolute;top:371.20px;line-height:12px;font-size:7.33px;color:#e4e4e4;white-space:nowrap;left:1142.3px;width:200px;text-align:center;">Deselect</div>
<div style="position:absolute;top:392.60px;line-height:12px;font-size:7.33px;color:#dcdcdc;white-space:nowrap;left:1097.8px;">Preview</div>
<div style="position:absolute;top:528.00px;line-height:12px;font-size:7.33px;color:#dcdcdc;white-space:nowrap;left:1097.8px;">Surface</div>
<div style="position:absolute;top:548.00px;line-height:12px;font-size:7.33px;color:#ffffff;white-space:nowrap;left:1084.2px;width:200px;text-align:center;">Use Nodes</div>
<div style="position:absolute;top:572.00px;line-height:12px;font-size:7.33px;color:#dcdcdc;white-space:nowrap;right:128px;text-align:right;">Surface</div>
<div style="position:absolute;top:572.20px;line-height:12px;font-size:7.33px;color:#dcdcdc;white-space:nowrap;left:1172.7px;">Principled BSDF</div>
<div style="position:absolute;top:596.50px;line-height:12px;font-size:7.33px;color:#dcdcdc;white-space:nowrap;left:1163.6px;">GGX</div>
<div style="position:absolute;top:613.10px;line-height:12px;font-size:7.33px;color:#dcdcdc;white-space:nowrap;left:1163.6px;">Random Walk</div>
<div style="position:absolute;top:629.50px;line-height:12px;font-size:7.33px;color:#dcdcdc;white-space:nowrap;right:128px;text-align:right;">Base Color</div>
<div style="position:absolute;top:646.20px;line-height:12px;font-size:7.33px;color:#dcdcdc;white-space:nowrap;right:128px;text-align:right;">Subsurface</div>
<div style="position:absolute;top:646.20px;line-height:12px;font-size:7.33px;color:#e6e6e6;white-space:nowrap;left:1113px;width:200px;text-align:center;">0.000</div>
<div style="position:absolute;top:662.90px;line-height:12px;font-size:7.33px;color:#dcdcdc;white-space:nowrap;right:128px;text-align:right;">Subsurface Radius</div>
<div style="position:absolute;top:663.00px;line-height:12px;font-size:7.33px;color:#e6e6e6;white-space:nowrap;left:1115.3px;width:200px;text-align:center;">1.000</div>
<div style="position:absolute;top:676.00px;line-height:12px;font-size:7.33px;color:#e6e6e6;white-space:nowrap;left:1115.3px;width:200px;text-align:center;">0.200</div>
<div style="position:absolute;top:689.10px;line-height:12px;font-size:7.33px;color:#e6e6e6;white-space:nowrap;left:1115.3px;width:200px;text-align:center;">0.100</div>
<div style="position:absolute;top:658.90px;line-height:12px;font-size:7.33px;color:#d6d6d6;white-space:nowrap;left:35.6px;">Playback</div>
<div style="position:absolute;top:658.90px;line-height:12px;font-size:7.33px;color:#d6d6d6;white-space:nowrap;left:81.6px;">Keying</div>
<div style="position:absolute;top:658.90px;line-height:12px;font-size:7.33px;color:#cdcdcd;white-space:nowrap;left:122.2px;">View</div>
<div style="position:absolute;top:658.90px;line-height:12px;font-size:7.33px;color:#cdcdcd;white-space:nowrap;left:148.4px;">Marker</div>
<div style="position:absolute;top:658.90px;line-height:12px;font-size:7.33px;color:#e8e8e8;white-space:nowrap;left:796.3px;width:200px;text-align:center;">1</div>
<div style="position:absolute;top:658.90px;line-height:12px;font-size:7.33px;color:#e0e0e0;white-space:nowrap;left:948.6px;">Start</div>
<div style="position:absolute;top:658.90px;line-height:12px;font-size:7.33px;color:#e8e8e8;white-space:nowrap;right:291.5px;text-align:right;">1</div>
<div style="position:absolute;top:658.90px;line-height:12px;font-size:7.33px;color:#e0e0e0;white-space:nowrap;left:1006.6px;">End</div>
<div style="position:absolute;top:658.90px;line-height:12px;font-size:7.33px;color:#e8e8e8;white-space:nowrap;right:235.4000000000001px;text-align:right;">250</div>
<div style="position:absolute;top:674.60px;line-height:12px;font-size:7.33px;color:#b4b4b4;white-space:nowrap;left:-26.102499999999992px;width:200px;text-align:center;">10</div>
<div style="position:absolute;top:674.60px;line-height:12px;font-size:7.33px;color:#b4b4b4;white-space:nowrap;left:13.1725px;width:200px;text-align:center;">20</div>
<div style="position:absolute;top:674.60px;line-height:12px;font-size:7.33px;color:#b4b4b4;white-space:nowrap;left:52.44749999999999px;width:200px;text-align:center;">30</div>
<div style="position:absolute;top:674.60px;line-height:12px;font-size:7.33px;color:#b4b4b4;white-space:nowrap;left:91.72250000000003px;width:200px;text-align:center;">40</div>
<div style="position:absolute;top:674.60px;line-height:12px;font-size:7.33px;color:#b4b4b4;white-space:nowrap;left:130.9975px;width:200px;text-align:center;">50</div>
<div style="position:absolute;top:674.60px;line-height:12px;font-size:7.33px;color:#b4b4b4;white-space:nowrap;left:170.27250000000004px;width:200px;text-align:center;">60</div>
<div style="position:absolute;top:674.60px;line-height:12px;font-size:7.33px;color:#b4b4b4;white-space:nowrap;left:209.5475px;width:200px;text-align:center;">70</div>
<div style="position:absolute;top:674.60px;line-height:12px;font-size:7.33px;color:#b4b4b4;white-space:nowrap;left:248.82250000000005px;width:200px;text-align:center;">80</div>
<div style="position:absolute;top:674.60px;line-height:12px;font-size:7.33px;color:#b4b4b4;white-space:nowrap;left:288.0975px;width:200px;text-align:center;">90</div>
<div style="position:absolute;top:674.60px;line-height:12px;font-size:7.33px;color:#b4b4b4;white-space:nowrap;left:327.37250000000006px;width:200px;text-align:center;">100</div>
<div style="position:absolute;top:674.60px;line-height:12px;font-size:7.33px;color:#b4b4b4;white-space:nowrap;left:366.64750000000004px;width:200px;text-align:center;">110</div>
<div style="position:absolute;top:674.60px;line-height:12px;font-size:7.33px;color:#b4b4b4;white-space:nowrap;left:405.9225px;width:200px;text-align:center;">120</div>
<div style="position:absolute;top:674.60px;line-height:12px;font-size:7.33px;color:#b4b4b4;white-space:nowrap;left:445.1975px;width:200px;text-align:center;">130</div>
<div style="position:absolute;top:674.60px;line-height:12px;font-size:7.33px;color:#b4b4b4;white-space:nowrap;left:484.47249999999997px;width:200px;text-align:center;">140</div>
<div style="position:absolute;top:674.60px;line-height:12px;font-size:7.33px;color:#b4b4b4;white-space:nowrap;left:523.7475px;width:200px;text-align:center;">150</div>
<div style="position:absolute;top:674.60px;line-height:12px;font-size:7.33px;color:#b4b4b4;white-space:nowrap;left:563.0225px;width:200px;text-align:center;">160</div>
<div style="position:absolute;top:674.60px;line-height:12px;font-size:7.33px;color:#b4b4b4;white-space:nowrap;left:602.2975px;width:200px;text-align:center;">170</div>
<div style="position:absolute;top:674.60px;line-height:12px;font-size:7.33px;color:#b4b4b4;white-space:nowrap;left:641.5725px;width:200px;text-align:center;">180</div>
<div style="position:absolute;top:674.60px;line-height:12px;font-size:7.33px;color:#b4b4b4;white-space:nowrap;left:680.8475px;width:200px;text-align:center;">190</div>
<div style="position:absolute;top:674.60px;line-height:12px;font-size:7.33px;color:#b4b4b4;white-space:nowrap;left:720.1225px;width:200px;text-align:center;">200</div>
<div style="position:absolute;top:674.60px;line-height:12px;font-size:7.33px;color:#b4b4b4;white-space:nowrap;left:759.3975px;width:200px;text-align:center;">210</div>
<div style="position:absolute;top:674.60px;line-height:12px;font-size:7.33px;color:#b4b4b4;white-space:nowrap;left:798.6725px;width:200px;text-align:center;">220</div>
<div style="position:absolute;top:674.60px;line-height:12px;font-size:7.33px;color:#b4b4b4;white-space:nowrap;left:837.9475px;width:200px;text-align:center;">230</div>
<div style="position:absolute;top:674.60px;line-height:12px;font-size:7.33px;color:#b4b4b4;white-space:nowrap;left:877.2225px;width:200px;text-align:center;">240</div>
<div style="position:absolute;top:674.60px;line-height:12px;font-size:7.33px;color:#b4b4b4;white-space:nowrap;left:916.4975000000001px;width:200px;text-align:center;">250</div>
<div style="position:absolute;top:674.60px;line-height:12px;font-size:7.33px;color:#ffffff;white-space:nowrap;left:-61px;width:200px;text-align:center;">1</div>
<div style="position:absolute;top:707.50px;line-height:12px;font-size:7.33px;color:#7e7e7e;white-space:nowrap;left:22.8px;">Set 3D Cursor</div>
<div style="position:absolute;top:707.50px;line-height:12px;font-size:7.33px;color:#7e7e7e;white-space:nowrap;left:92.6px;">Box Select</div>
<div style="position:absolute;top:707.50px;line-height:12px;font-size:7.33px;color:#7e7e7e;white-space:nowrap;left:163.8px;">Rotate View</div>
<div style="position:absolute;top:707.50px;line-height:12px;font-size:7.33px;color:#7e7e7e;white-space:nowrap;left:304.6px;">Select</div>
<div style="position:absolute;top:707.50px;line-height:12px;font-size:7.33px;color:#7e7e7e;white-space:nowrap;left:348.6px;">Move</div>
<div style="position:absolute;top:707.70px;line-height:12px;font-size:7.33px;color:#7e7e7e;white-space:nowrap;right:4.400000000000091px;text-align:right;">3.1.0</div>
</div>
<div style="position:absolute;left:1021px;top:667px;font-family:'Liberation Sans',sans-serif;font-weight:bold;font-size:34px;line-height:40px;color:#000;opacity:0.07;letter-spacing:1px;white-space:nowrap;filter:blur(0.6px)">katsbits.com</div>
</body></html>
